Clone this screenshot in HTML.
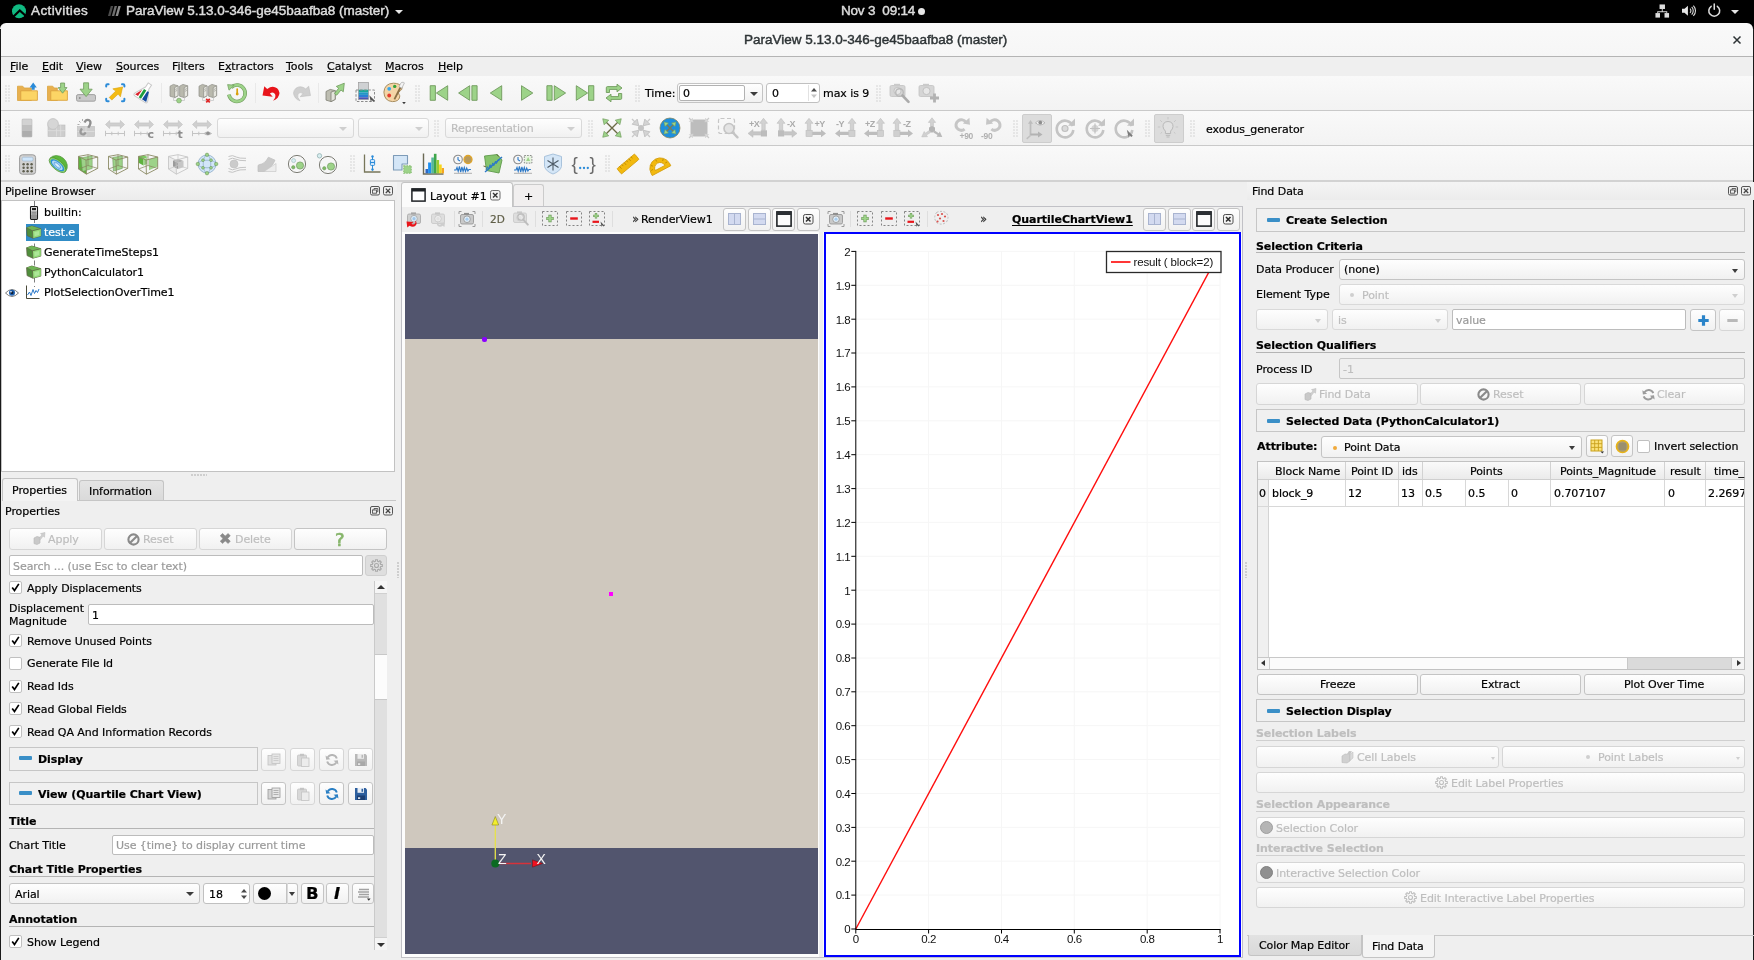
<!DOCTYPE html>
<html lang="en">
<head>
<meta charset="utf-8">
<title>ParaView 5.13.0-346-ge45baafba8 (master)</title>
<style>
*{box-sizing:border-box;margin:0;padding:0}
html,body{width:1754px;height:960px;overflow:hidden;background:#efefef}
body{position:relative;will-change:transform;font-family:"DejaVu Sans","Liberation Sans",sans-serif;font-size:11px;letter-spacing:-0.06px;color:#000;line-height:1;-webkit-text-stroke:0.2px}
.a{position:absolute}
.t{position:absolute;white-space:nowrap;line-height:14px;height:14px}
.b{font-weight:bold;letter-spacing:-.06px}
.dis{color:#bebebe}
/* gnome top bar */
#topbar{left:0;top:0;width:1754px;height:31px;background:#000;color:#dcdcdc;font-family:"Liberation Sans","DejaVu Sans",sans-serif;font-size:13.5px;font-weight:normal;letter-spacing:0;-webkit-text-stroke:0.45px #dcdcdc}
#topbar .t{line-height:16px;height:16px;top:3px}
/* window */
#titlebar{left:0;top:23px;width:1753px;height:34px;background:linear-gradient(#f9f9f9,#f6f6f6);border-bottom:1px solid #b4b4b4;border-top-left-radius:6px;border-top-right-radius:6px}
#menubar{left:0;top:57px;width:1754px;height:19px;background:#efefef}
.tbrow{left:0;width:1754px;height:35px;background:linear-gradient(#f9f9f9,#f3f3f3);border-bottom:1px solid #c9c9c9}
.u{text-decoration:underline;text-underline-offset:1px}
/* generic qt widgets */
.btn{position:absolute;border:1px solid #c4c4c4;border-radius:3px;background:linear-gradient(#fefefe,#f1f1f1);text-align:center;white-space:nowrap}
.btn.d{border-color:#d6d6d6;color:#bebebe}
.inp{position:absolute;border:1px solid #bcbcbc;border-radius:2px;background:#fff;white-space:nowrap}
.cmb{position:absolute;border:1px solid #c4c4c4;border-radius:3px;background:linear-gradient(#fefefe,#f1f1f1);white-space:nowrap}
.cmb.d{border-color:#d9d9d9;color:#bebebe}
.arr{position:absolute;width:0;height:0;border-left:4px solid transparent;border-right:4px solid transparent;border-top:4px solid #3c3c3c}
.arr.d{border-top-color:#cfcfcf}
.hdr{position:absolute;border:1px solid #c6c6c6;background:#f0f0f0;font-weight:bold;letter-spacing:-.06px}
.hdr .minus{position:absolute;left:9px;top:8px;width:13px;height:4px;background:#3a8fc7;border-radius:1px}
.hline{position:absolute;height:1px;background:#b4b4b4}
.cb{position:absolute;width:13px;height:13px;border:1px solid #c0c0c0;border-radius:2px;background:#fff}
.cb svg{position:absolute;left:0;top:0}
.handle{position:absolute;width:6px;height:17px;background-image:radial-gradient(circle at 1px 1px,#c3c3c3 0.5px,transparent 0.8px);background-size:3px 3px}
.sep{position:absolute;width:1px;height:20px;background:#e9e9e9;margin-top:1px}
svg{position:absolute;overflow:visible}
</style>
</head>
<body>
<!-- ======= GNOME TOP BAR ======= -->
<div id="topbar" class="a">
<svg style="left:11px;top:4px" width="16" height="15" viewBox="0 0 16 15"><circle cx="8" cy="7.300" r="7" fill="#10b981"/><path d="M.5 14.500L8.800 6.400L16 13" fill="none" stroke="#000" stroke-width="2.200"/></svg>
<span class="t" style="left:31px;letter-spacing:.4px">Activities</span>
<svg style="left:108px;top:6px" width="13" height="10" viewBox="0 0 13 10"><path d="M0 10L2.800 0h2.400L2.400 10z" fill="#4d4d4d"/><path d="M3.800 10L6.600 0H9L6.200 10z" fill="#6e6e6e"/><path d="M7.600 10L10.400 0h2.400L10 10z" fill="#8a8a8a"/></svg>
<span class="t" style="left:126px">ParaView 5.13.0-346-ge45baafba8 (master)</span>
<span class="arr" style="left:395px;top:10px;border-top-color:#e6e6e6"></span>
<span class="t" style="left:841px;letter-spacing:-.2px">Nov 3&nbsp; 09:14</span>
<span class="a" style="left:918px;top:8px;width:7px;height:7px;border-radius:50%;background:#e6e6e6"></span>
<!-- tray -->
<svg style="left:1655px;top:4px" width="14.500" height="14.500" viewBox="0 0 16 16" fill="#dcdcdc"><rect x="5" y="0.5" width="6" height="5"/><rect x="0.5" y="10" width="5" height="5"/><rect x="10.5" y="10" width="5" height="5"/><path d="M7.5 5h1v3h5v2h-1v-1h-9v1h-1v-2h5z"/></svg>
<svg style="left:1680.500px;top:4px" width="15.500" height="13.500" viewBox="0 0 18 16" fill="none" stroke="#dcdcdc"><path d="M1 5.5h3l4-3.5v12l-4-3.5h-3z" fill="#e6e6e6" stroke="none"/><path d="M10.5 5.5a3.5 3.5 0 0 1 0 5M12.5 3.5a6.5 6.5 0 0 1 0 9M14.5 1.8a9 9 0 0 1 0 12.4" stroke-width="1.3"/></svg>
<svg style="left:1706.500px;top:3px" width="14.500" height="14.500" viewBox="0 0 16 16" fill="none" stroke="#dcdcdc" stroke-width="1.700" stroke-linecap="round"><path d="M4.6 3.6a6 6 0 1 0 6.8 0M8 1v6"/></svg>
<span class="arr" style="left:1731px;top:10px;border-top-color:#e6e6e6"></span>
</div>

<!-- ======= TITLE BAR ======= -->
<div id="titlebar" class="a">
<span class="t" style="left:744px;top:9px;font-family:'Liberation Sans',sans-serif;font-weight:normal;font-size:13.5px;letter-spacing:0;line-height:16px;height:16px;color:#2e3436;-webkit-text-stroke:0.45px #2e3436">ParaView 5.13.0-346-ge45baafba8 (master)</span>
<svg style="left:1733px;top:13px" width="8" height="8" viewBox="0 0 8 8"><path d="M.5 .5l7 7M7.500 .5l-7 7" stroke="#2e3436" stroke-width="1.500"/></svg>
</div>

<!-- ======= MENU BAR ======= -->
<div id="menubar" class="a">
<span class="t" style="left:10px;top:3px"><span class="u">F</span>ile</span>
<span class="t" style="left:42px;top:3px"><span class="u">E</span>dit</span>
<span class="t" style="left:76px;top:3px"><span class="u">V</span>iew</span>
<span class="t" style="left:116px;top:3px"><span class="u">S</span>ources</span>
<span class="t" style="left:172px;top:3px">F<span class="u">i</span>lters</span>
<span class="t" style="left:218px;top:3px">E<span class="u">x</span>tractors</span>
<span class="t" style="left:286px;top:3px"><span class="u">T</span>ools</span>
<span class="t" style="left:327px;top:3px"><span class="u">C</span>atalyst</span>
<span class="t" style="left:385px;top:3px"><span class="u">M</span>acros</span>
<span class="t" style="left:438px;top:3px"><span class="u">H</span>elp</span>
</div>


<!-- ======= TOOLBARS ======= -->
<div class="a tbrow" style="top:76px"></div>
<div class="a tbrow" style="top:111px"></div>
<div class="a tbrow" style="top:146px;height:35px;border-bottom:none"></div>
<i class="handle" style="left:5px;top:85px"></i>
<svg style="left:15px;top:81px" width="24" height="24" viewBox="0 0 24 24"><path d="M2.5 19.5V5.2h5.2l1.6 1.8h7v12.5z" fill="#e8b04f" stroke="#dba43f" stroke-width=".8"/><path d="M5.8 19.3V9.8h16.6v9.5z" fill="#fcd565" stroke="#dba43f" stroke-width=".9"/><path d="M14.6 6.6L18.2 1.6L21.8 6.6h-2.1v2.2h-3v-2.2z" fill="#2b8bd8"/></svg>
<svg style="left:45px;top:81px" width="24" height="24" viewBox="0 0 24 24"><path d="M2.5 19.5V5.2h5.2l1.6 1.8h3v12.5z" fill="#e8b04f" stroke="#dba43f" stroke-width=".8"/><path d="M5.8 19.3V9.8h16.6v9.5z" fill="#fcd565" stroke="#dba43f" stroke-width=".9"/><path d="M15.6 2h4v4.6h2.4L17.6 12.2L13.2 6.6h2.4z" fill="#9dd389" stroke="#6f9a5c" stroke-width=".8"/></svg>
<svg style="left:74px;top:81px" width="24" height="24" viewBox="0 0 24 24"><rect x="2.5" y="13.6" width="19" height="6.6" rx="1.6" fill="#c9c9c9" stroke="#9b9b9b" stroke-width=".9"/><circle cx="5.8" cy="17" r=".9" fill="#8a8a8a"/><path d="M9.6 1.8h5v6.4h3.6L12.1 15.6L6 8.2h3.6z" fill="#9dd389" stroke="#6f9a5c" stroke-width=".8"/></svg>
<svg style="left:103px;top:81px" width="24" height="24" viewBox="0 0 24 24"><path d="M5.200 17.200l7.600-7.400l-3.400-2.600l11.400-2.200l-2.600 11.400l-2.600-3.200l-7.400 7z" fill="#f4bb12" stroke="#d9a20c" stroke-width=".7" stroke-linejoin="round" transform="translate(12.500 12) scale(.86) translate(-12.500 -12)"/><g fill="none" stroke="#2b8bd8" stroke-width="2" stroke-linecap="round"><path d="M3.200 5.600V4.400Q3.200 3.200 4.400 3.200H5.600"/><path d="M19 3.200h1.200Q21.400 3.200 21.400 4.400v1.200"/><path d="M3.200 17.800v1.200Q3.200 20.200 4.400 20.200h1.200"/><path d="M21.400 17.800v1.200Q21.400 20.200 20.200 20.200h-1.200"/></g></svg>
<svg style="left:132px;top:81px" width="24" height="24" viewBox="0 0 24 24"><g transform="rotate(33 12 12)"><path d="M10 1.200h4v5l5.600 10.600q1 2.600-1.800 2.600H6.200q-2.800 0-1.800-2.600L10 6.200z" fill="#fff" stroke="#c9c9c9" stroke-width="1"/><path d="M8.600 10.200l-3.400 7.600h3.400z" fill="#d9202a"/><path d="M9.800 8.600v9.800h2.800V8.600z" fill="#1e9e3e"/><path d="M13.800 8.600h1.800l3.200 9.800h-5z" fill="#134a9c"/></g></svg>
<i class="sep" style="left:161px;top:82px"></i>
<svg style="left:167px;top:81px" width="24" height="24" viewBox="0 0 24 24"><g stroke="#8e8e86" stroke-width=".7" stroke-linejoin="round"><path d="M3 5.200l3.400-1.800l4.600 1.400v10l-3.400 1.800L3 15.200z" fill="#b9b9ad"/><path d="M7.600 6.600L11 4.800v10l-3.400 1.800z" fill="#e6e6df"/><path d="M12.600 5.200l3.400-1.800l4.600 1.400v10l-3.400 1.800l-4.600-1.400z" fill="#b9b9ad"/><path d="M17.200 6.600l3.400-1.800v10l-3.400 1.800z" fill="#e6e6df"/></g><path d="M8.400 8.500l1.800-.9M8.400 10.300l1.800-.9M18 8.500l1.800-.9M18 10.300l1.800-.9" stroke="#9a9a92" stroke-width=".7"/><path d="M6.500 16.500v3h11v-3" fill="none" stroke="#cdcdcd" stroke-width=".9"/><circle cx="12" cy="19.600" r="2.400" fill="#9dd389" stroke="#6f9a5c" stroke-width=".6"/></svg>
<svg style="left:196px;top:81px" width="24" height="24" viewBox="0 0 24 24"><g stroke="#8e8e86" stroke-width=".7" stroke-linejoin="round"><path d="M3 5.200l3.400-1.800l4.600 1.400v10l-3.400 1.800L3 15.200z" fill="#b9b9ad"/><path d="M7.600 6.600L11 4.800v10l-3.400 1.800z" fill="#e6e6df"/><path d="M12.600 5.200l3.400-1.800l4.600 1.400v10l-3.400 1.800l-4.600-1.400z" fill="#b9b9ad"/><path d="M17.200 6.600l3.400-1.800v10l-3.400 1.800z" fill="#e6e6df"/></g><path d="M8.400 8.500l1.800-.9M8.400 10.300l1.800-.9M18 8.500l1.800-.9M18 10.300l1.800-.9" stroke="#9a9a92" stroke-width=".7"/><path d="M6.500 16.500v3h11v-3" fill="none" stroke="#cdcdcd" stroke-width=".9"/><path d="M10.200 17.800l3.600 3.600M13.800 17.800l-3.600 3.600" stroke="#e02828" stroke-width="1.700"/></svg>
<svg style="left:225px;top:81px" width="24" height="24" viewBox="0 0 24 24"><path d="M6.200 6.400A8.200 8.200 0 1 1 3.900 13.600" fill="none" stroke="#6f9a5c" stroke-width="3.600"/><path d="M6.200 6.400A8.200 8.200 0 1 1 3.900 13.600" fill="none" stroke="#9dd389" stroke-width="2.400"/><path d="M2.600 3.600l6.600 .6l-5.200 5z" fill="#9dd389" stroke="#6f9a5c" stroke-width=".7"/><path d="M12.200 8v4" stroke="#d9a10f" stroke-width="1.700" stroke-linecap="round"/><circle cx="12.200" cy="13" r="1.400" fill="#d9a10f"/></svg>
<i class="sep" style="left:255px;top:82px"></i>
<svg style="left:260px;top:81px" width="24" height="24" viewBox="0 0 24 24"><path d="M2.500 14.500l1.800-9.300l2.900 2.700q5.400-4 9.900-.6q4.300 4 .6 9.400q-1.700 2.200-4.700 3.100q3.300-3.500 2.100-6.500q-1.700-3.100-5.200-.9l2.800 3.300z" fill="#e8151b"/></svg>
<svg style="left:289px;top:81px" width="24" height="24" viewBox="0 0 24 24"><path d="M21.500 14.500l-1.800-9.300l-2.900 2.700q-5.400-4-9.900-.6q-4.300 4-.6 9.400q1.700 2.200 4.700 3.100q-3.300-3.500-2.100-6.500q1.700-3.100 5.200-.9l-2.800 3.300z" fill="#cfcfcf" stroke="#bdbdbd" stroke-width=".6"/></svg>
<i class="sep" style="left:318px;top:82px"></i>
<svg style="left:323px;top:81px" width="24" height="24" viewBox="0 0 24 24"><path d="M3 10.500l4.200-2.100l5 1.200v8.800l-4.200 2.200l-5-1.500z" fill="#bdbdb1" stroke="#7f7f73" stroke-width=".8"/><path d="M8 11.200l4.200-1.600v8.800l-4.200 2.200z" fill="#e4e4dc" stroke="#7f7f73" stroke-width=".8"/><path d="M11.500 12.500l4.200-5.300l-2.400-1.800l8-3.200l-1 8.600l-2.300-1.800l-4.300 5.200z" fill="#9dd389" stroke="#6f9a5c" stroke-width=".8"/></svg>
<svg style="left:353px;top:81px" width="24" height="24" viewBox="0 0 24 24"><rect x="5.500" y="1.500" width="10" height="7.200" fill="#cfd1d3"/><rect x="5.500" y="8.700" width="10" height="2.600" fill="#18a99a"/><rect x="5.500" y="11.300" width="10" height="2.600" fill="#2397c4"/><rect x="5.500" y="13.900" width="10" height="2.400" fill="#2a7fd6"/><rect x="5.500" y="16.300" width="10" height="2.200" fill="#4c53b4"/><rect x="5.500" y="1.500" width="10" height="17" fill="none" stroke="#9a9a9a" stroke-width=".7"/><rect x="3" y="9" width="18.500" height="11.500" fill="none" stroke="#8c8c8c" stroke-width="1" stroke-dasharray="2.500 1.600"/><path d="M16.300 14.200l5.300 5.400l-1.300 1.200l-1.600-1.700l-.8 2.200z" fill="#555"/></svg>
<svg style="left:382px;top:81px" width="24" height="24" viewBox="0 0 24 24"><path d="M11.500 2.200q6.500 0 8.400 4.300q.6 2-1.500 3.200q-2.600 1.200-1.700 3.300q1.400 1.300 1 3q-.9 4.600-7.300 4.600q-8.200-.6-8.500-9.500q.6-8.600 9.600-8.900z" fill="#f4d5a6" stroke="#a88d5e" stroke-width="1"/><circle cx="7.200" cy="7.800" r="1.900" fill="#35a7f0"/><circle cx="12.700" cy="5.400" r="1.700" fill="#35a33a"/><circle cx="7.200" cy="14.500" r="1.900" fill="#e53b2d"/><path d="M19.300 2.600l1.700 .9l-7.800 15.300l-1.600-.8z" fill="#8a7146"/><path d="M18.700 2.300q1-1.600 2.800-.9l.9 .5l-2.500 5.300l-2.900-1.500z" fill="#f3f3f3" stroke="#9a9a9a" stroke-width=".6"/><path d="M20.200 21l3.600 0l-1.800 2.200z" fill="#3a3a3a"/></svg>
<i class="handle" style="left:415px;top:85px"></i>
<svg style="left:426px;top:81px" width="24" height="24" viewBox="0 0 24 24"><path d="M4.200 4.700h5.200v14.600H4.200z" fill="#9dd389" stroke="#6f9a5c" stroke-width=".9" stroke-linejoin="round"/><path d="M21.700 4.700v14.600L10.400 12z" fill="#9dd389" stroke="#6f9a5c" stroke-width=".9" stroke-linejoin="round"/></svg>
<svg style="left:456px;top:81px" width="24" height="24" viewBox="0 0 24 24"><path d="M13.700 4.700v14.600L2.600 12z" fill="#9dd389" stroke="#6f9a5c" stroke-width=".9" stroke-linejoin="round"/><path d="M15.900 4.700h5.200v14.600h-5.200z" fill="#9dd389" stroke="#6f9a5c" stroke-width=".9" stroke-linejoin="round"/></svg>
<svg style="left:484px;top:81px" width="24" height="24" viewBox="0 0 24 24"><path d="M17.700 4.700v14.600L6.300 12z" fill="#9dd389" stroke="#6f9a5c" stroke-width=".9" stroke-linejoin="round"/></svg>
<svg style="left:515px;top:81px" width="24" height="24" viewBox="0 0 24 24"><path d="M6.500 4.700v14.600L17.800 12z" fill="#9dd389" stroke="#6f9a5c" stroke-width=".9" stroke-linejoin="round"/></svg>
<svg style="left:544px;top:81px" width="24" height="24" viewBox="0 0 24 24"><path d="M2.900 4.700h5.200v14.600H2.900z" fill="#9dd389" stroke="#6f9a5c" stroke-width=".9" stroke-linejoin="round"/><path d="M10.300 4.700v14.600L21.600 12z" fill="#9dd389" stroke="#6f9a5c" stroke-width=".9" stroke-linejoin="round"/></svg>
<svg style="left:574px;top:81px" width="24" height="24" viewBox="0 0 24 24"><path d="M2.300 4.700v14.600L13.600 12z" fill="#9dd389" stroke="#6f9a5c" stroke-width=".9" stroke-linejoin="round"/><path d="M14.600 4.700h5.200v14.600h-5.200z" fill="#9dd389" stroke="#6f9a5c" stroke-width=".9" stroke-linejoin="round"/></svg>
<svg style="left:602px;top:81px" width="24" height="24" viewBox="0 0 24 24"><g fill="#9dd389" stroke="#6f9a5c" stroke-width=".9" stroke-linejoin="round"><path d="M4.300 11.500V6.800q0-1.200 1.200-1.200h9.500V3.200l5 3.800l-5 3.800V8.400H7.500v3.100z"/><path d="M19.700 12.500v4.700q0 1.200-1.200 1.200H9v2.400l-5-3.800l5-3.800v2.400h7.500v-3.100z"/></g></svg>
<i class="handle" style="left:635px;top:85px"></i>
<span class="t" style="left:645px;top:87px">Time:</span>
<div class="cmb" style="left:677px;top:83px;width:86px;height:20px"><div class="inp" style="left:1px;top:1px;width:66px;height:16px;border-color:#b2b2b2"><span class="t" style="left:3px;top:1px">0</span></div><i class="arr" style="left:72px;top:8px"></i></div>
<div class="inp" style="left:766px;top:83px;width:54px;height:20px;border-color:#c0c0c0;border-radius:3px"><span class="t" style="left:5px;top:3px">0</span><i class="a" style="left:41px;top:1px;width:1px;height:16px;background:#e2e2e2"></i><svg style="left:43px;top:3px" width="8" height="12" viewBox="0 0 8 12"><path d="M1 4.500L4 1l3 3.500z" fill="#4a4a4a"/><path d="M1 7.500L4 11l3-3.500z" fill="#c4c4c4"/></svg></div>
<span class="t" style="left:823px;top:87px">max is 9</span>
<i class="handle" style="left:876px;top:85px"></i>
<svg style="left:888px;top:81px" width="24" height="24" viewBox="0 0 24 24"><g opacity=".9"><rect x="2" y="4.500" width="15" height="11" rx="1.500" fill="#d2d2d2" stroke="#bdbdbd" stroke-width=".8"/><rect x="6" y="2.800" width="6" height="2.500" fill="#c6c6c6"/><circle cx="9.500" cy="10" r="3.600" fill="#e6e6e6" stroke="#bdbdbd" stroke-width="1"/></g><circle cx="11.500" cy="11.500" r="3.800" fill="none" stroke="#b9b9b9" stroke-width="1.400"/><path d="M14.500 14.500l6 6.300" stroke="#ababab" stroke-width="2.600" stroke-linecap="round"/></svg>
<svg style="left:917px;top:81px" width="24" height="24" viewBox="0 0 24 24"><g opacity=".9"><rect x="2" y="4.500" width="15" height="11" rx="1.500" fill="#d2d2d2" stroke="#bdbdbd" stroke-width=".8"/><rect x="6" y="2.800" width="6" height="2.500" fill="#c6c6c6"/><circle cx="9.500" cy="10" r="3.600" fill="#e6e6e6" stroke="#bdbdbd" stroke-width="1"/></g><path d="M17.500 12.500v9M13 17h9" stroke="#b2b2b2" stroke-width="2.800"/></svg>
<i class="handle" style="left:5px;top:120px"></i>
<svg style="left:15px;top:116px" width="24" height="24" viewBox="0 0 24 24"><rect x="7" y="3" width="10" height="6" fill="#d2d2d2"/><rect x="7" y="9" width="10" height="6" fill="#bfbfbf"/><rect x="7" y="15" width="10" height="6" fill="#adadad"/><rect x="7" y="3" width="10" height="18" rx="1" fill="none" stroke="#bcbcbc" stroke-width=".6"/></svg>
<svg style="left:44px;top:116px" width="24" height="24" viewBox="0 0 24 24"><rect x="4" y="9" width="17" height="11.500" fill="#cdcdcd" stroke="#bdbdbd" stroke-width=".6"/><path d="M12.500 9v11.500M4 14.700h17M16.700 9v11.500" stroke="#dedede" stroke-width=".8"/><circle cx="9" cy="8" r="5.400" fill="#d6d6d6" stroke="#c2c2c2" stroke-width=".8"/></svg>
<svg style="left:73px;top:116px" width="24" height="24" viewBox="0 0 24 24"><rect x="4.500" y="10.500" width="17" height="10" fill="#cdcdcd" stroke="#bdbdbd" stroke-width=".6"/><path d="M13 10.500v10M4.500 15.500h17" stroke="#e0e0e0" stroke-width=".8"/><path d="M11.500 6.500q1.500-3.500 4.300-2.400q2.800 1.600 1 5l-1.500 2.600" fill="none" stroke="#8f8f8f" stroke-width="2.300"/><path d="M9 12.500q-2.700 3.400-.6 5.400q2.500 1.600 4.400-1.500" fill="none" stroke="#9a9a9a" stroke-width="2.300"/><path d="M6 5l1.500 1.500M9.500 3v2M4.500 8.500h2" stroke="#a5a5a5" stroke-width=".9"/></svg>
<svg style="left:103px;top:116px" width="24" height="24" viewBox="0 0 24 24"><path d="M2.500 8.500l4.200-4v2.400h10.600V4.500l4.200 4l-4.200 4v-2.400H6.700v2.400z" fill="#cfcfcf" stroke="#bfbfbf" stroke-width=".6"/><path d="M2.500 17.500h19M2.500 14.800v5.400M21.500 14.800v5.400M8.800 15.700v3.600M15.200 15.700v3.600" stroke="#c4c4c4" stroke-width="1"/></svg>
<svg style="left:132px;top:116px" width="24" height="24" viewBox="0 0 24 24"><path d="M2.500 8.500l4.200-4v2.400h10.600V4.500l4.200 4l-4.200 4v-2.400H6.700v2.400z" fill="#cfcfcf" stroke="#bfbfbf" stroke-width=".6"/><path d="M2.500 17.500h19M2.500 14.800v5.400M8.800 15.700v3.600M15.200 15.700v3.600" stroke="#c4c4c4" stroke-width="1"/><text x="15.500" y="21.500" font-family="DejaVu Sans" font-weight="bold" font-size="11" fill="#8f8f8f">c</text></svg>
<svg style="left:161px;top:116px" width="24" height="24" viewBox="0 0 24 24"><path d="M2.500 8.500l4.200-4v2.400h10.600V4.500l4.200 4l-4.200 4v-2.400H6.700v2.400z" fill="#cfcfcf" stroke="#bfbfbf" stroke-width=".6"/><path d="M2.500 17.500h19M2.500 14.800v5.400M8.800 15.700v3.600M15.200 15.700v3.600" stroke="#c4c4c4" stroke-width="1"/><text x="16.500" y="21.500" font-family="DejaVu Sans" font-weight="bold" font-size="11" fill="#8f8f8f">t</text></svg>
<svg style="left:190px;top:116px" width="24" height="24" viewBox="0 0 24 24"><path d="M2.500 8.500l4.200-4v2.400h10.600V4.500l4.200 4l-4.200 4v-2.400H6.700v2.400z" fill="#cfcfcf" stroke="#bfbfbf" stroke-width=".6"/><path d="M2.500 17.500h19M2.500 14.800v5.400M8.800 15.700v3.600" stroke="#c4c4c4" stroke-width="1"/><path d="M13.500 17.500q4-4.200 8.500 0q-4.500 4.200-8.500 0z" fill="#bdbdbd"/><circle cx="18" cy="17.300" r="1.700" fill="#8f8f8f"/></svg>
<div class="cmb d" style="left:217px;top:118px;width:137px;height:20px"><i class="arr d" style="left:121px;top:8px"></i></div>
<div class="cmb d" style="left:358px;top:118px;width:71px;height:20px"><i class="arr d" style="left:56px;top:8px"></i></div>
<i class="handle" style="left:434px;top:120px"></i>
<div class="cmb d" style="left:445px;top:118px;width:137px;height:20px"><span class="t" style="left:5px;top:3px">Representation</span><i class="arr d" style="left:121px;top:8px"></i></div>
<i class="handle" style="left:588px;top:120px"></i>
<svg style="left:600px;top:116px" width="24" height="24" viewBox="0 0 24 24"><path d="M5 5l14 14M19 5L5 19" stroke="#6b6a45" stroke-width="1.400"/><path d="M0 -3.200L3.600 2.600H-3.600z" transform="translate(4.8 4.8) rotate(-45) scale(0.9)" fill="#9dd389" stroke="#6f9a5c" stroke-width=".7" stroke-linejoin="round"/><path d="M0 -3.200L3.600 2.600H-3.600z" transform="translate(19.2 4.8) rotate(45) scale(0.9)" fill="#9dd389" stroke="#6f9a5c" stroke-width=".7" stroke-linejoin="round"/><path d="M0 -3.200L3.600 2.600H-3.600z" transform="translate(4.8 19.2) rotate(-135) scale(0.9)" fill="#9dd389" stroke="#6f9a5c" stroke-width=".7" stroke-linejoin="round"/><path d="M0 -3.200L3.600 2.600H-3.600z" transform="translate(19.2 19.2) rotate(135) scale(0.9)" fill="#9dd389" stroke="#6f9a5c" stroke-width=".7" stroke-linejoin="round"/></svg>
<svg style="left:629px;top:116px" width="24" height="24" viewBox="0 0 24 24"><circle cx="12" cy="12" r="3" fill="#c4c4c4"/><path d="M0 -3.200L3.600 2.600H-3.600z" transform="translate(7.5 7.5) rotate(135) scale(1)" fill="#d4d4d4" stroke="#b9b9b9" stroke-width=".7" stroke-linejoin="round"/><path d="M0 -3.200L3.600 2.600H-3.600z" transform="translate(16.5 7.5) rotate(-135) scale(1)" fill="#d4d4d4" stroke="#b9b9b9" stroke-width=".7" stroke-linejoin="round"/><path d="M0 -3.200L3.600 2.600H-3.600z" transform="translate(7.5 16.5) rotate(45) scale(1)" fill="#d4d4d4" stroke="#b9b9b9" stroke-width=".7" stroke-linejoin="round"/><path d="M0 -3.200L3.600 2.600H-3.600z" transform="translate(16.5 16.5) rotate(-45) scale(1)" fill="#d4d4d4" stroke="#b9b9b9" stroke-width=".7" stroke-linejoin="round"/><path d="M3 3l3 3M21 3l-3 3M3 21l3-3M21 21l-3-3" stroke="#c9c9c9" stroke-width="1.300"/></svg>
<svg style="left:658px;top:116px" width="24" height="24" viewBox="0 0 24 24"><circle cx="12" cy="12" r="10" fill="#1e8fdd" stroke="#7d7c52" stroke-width=".7"/><path d="M7.500 7.500l9 9M16.500 7.500l-9 9" stroke="#7d7c52" stroke-width="1.300"/><path d="M0 -3.200L3.600 2.600H-3.600z" transform="translate(7.5 7.5) rotate(-45) scale(0.7)" fill="#9dd389" stroke="#6f9a5c" stroke-width=".7" stroke-linejoin="round"/><path d="M0 -3.200L3.600 2.600H-3.600z" transform="translate(16.5 7.5) rotate(45) scale(0.7)" fill="#9dd389" stroke="#6f9a5c" stroke-width=".7" stroke-linejoin="round"/><path d="M0 -3.200L3.600 2.600H-3.600z" transform="translate(7.5 16.5) rotate(-135) scale(0.7)" fill="#9dd389" stroke="#6f9a5c" stroke-width=".7" stroke-linejoin="round"/><path d="M0 -3.200L3.600 2.600H-3.600z" transform="translate(16.5 16.5) rotate(135) scale(0.7)" fill="#9dd389" stroke="#6f9a5c" stroke-width=".7" stroke-linejoin="round"/></svg>
<svg style="left:687px;top:116px" width="24" height="24" viewBox="0 0 24 24"><rect x="3.500" y="3.500" width="17" height="17" rx="4" fill="#bdbdbd"/><path d="M0 -3.200L3.600 2.600H-3.600z" transform="translate(5 5) rotate(135) scale(0.6)" fill="#d8d8d8" stroke="#c4c4c4" stroke-width=".7" stroke-linejoin="round"/><path d="M0 -3.200L3.600 2.600H-3.600z" transform="translate(19 5) rotate(-135) scale(0.6)" fill="#d8d8d8" stroke="#c4c4c4" stroke-width=".7" stroke-linejoin="round"/><path d="M0 -3.200L3.600 2.600H-3.600z" transform="translate(5 19) rotate(45) scale(0.6)" fill="#d8d8d8" stroke="#c4c4c4" stroke-width=".7" stroke-linejoin="round"/><path d="M0 -3.200L3.600 2.600H-3.600z" transform="translate(19 19) rotate(-45) scale(0.6)" fill="#d8d8d8" stroke="#c4c4c4" stroke-width=".7" stroke-linejoin="round"/><path d="M2 2l2 2M22 2l-2 2M2 22l2-2M22 22l-2-2" stroke="#c9c9c9" stroke-width="1.200"/></svg>
<svg style="left:716px;top:116px" width="24" height="24" viewBox="0 0 24 24"><rect x="2.500" y="2.500" width="16" height="15" rx="2" fill="none" stroke="#c6c6c6" stroke-width="1.200" stroke-dasharray="4 2.500"/><circle cx="13" cy="12.500" r="5" fill="#e4e4e4" stroke="#c4c4c4" stroke-width="1.600"/><path d="M16.800 16.500l4.700 4.800" stroke="#c4c4c4" stroke-width="2.400" stroke-linecap="round"/></svg>
<svg style="left:746px;top:116px" width="24" height="24" viewBox="0 0 24 24"><text x="3" y="11" font-family="Liberation Sans" font-weight="bold" font-size="9" fill="#ababab" letter-spacing="-.4">+X</text><path d="M17.5 2.300l4 5h-2.300v7h-3.400v-7h-2.300z" fill="#d2d2d2" stroke="#bdbdbd" stroke-width=".6"/><rect x="14.800" y="14.300" width="6.200" height="6.200" fill="#bdbdbd"/><path d="M14.800 15.700H7v-2.200l-5 3.900l5 3.900v-2.200h7.800z" fill="#c6c6c6" stroke="#bababa" stroke-width=".5"/></svg>
<svg style="left:775px;top:116px" width="24" height="24" viewBox="0 0 24 24"><text x="12" y="11" font-family="Liberation Sans" font-weight="bold" font-size="9" fill="#ababab" letter-spacing="-.4">-X</text><path d="M6 2.300l4 5h-2.300v7h-3.400v-7h-2.300z" fill="#d2d2d2" stroke="#bdbdbd" stroke-width=".6"/><rect x="3" y="14.300" width="6.200" height="6.200" fill="#bdbdbd"/><path d="M9.200 15.700H17v-2.200l5 3.900l-5 3.900v-2.200H9.200z" fill="#c6c6c6" stroke="#bababa" stroke-width=".5"/></svg>
<svg style="left:804px;top:116px" width="24" height="24" viewBox="0 0 24 24"><text x="10.5" y="11" font-family="Liberation Sans" font-weight="bold" font-size="9" fill="#ababab" letter-spacing="-.4">+Y</text><path d="M5 2.300l4 5h-2.300v7h-3.400v-7h-2.300z" fill="#d2d2d2" stroke="#bdbdbd" stroke-width=".6"/><rect x="2" y="14.300" width="6.200" height="6.200" fill="#d0d0d0" stroke="#bdbdbd" stroke-width=".6"/><path d="M8.200 15.700H17v-2.200l5 3.900l-5 3.900v-2.200H8.200z" fill="#bdbdbd"/></svg>
<svg style="left:833px;top:116px" width="24" height="24" viewBox="0 0 24 24"><text x="3" y="11" font-family="Liberation Sans" font-weight="bold" font-size="9" fill="#ababab" letter-spacing="-.4">-Y</text><path d="M19 2.300l4 5h-2.300v7h-3.400v-7h-2.300z" fill="#d2d2d2" stroke="#bdbdbd" stroke-width=".6"/><rect x="15.800" y="14.300" width="6.200" height="6.200" fill="#d0d0d0" stroke="#bdbdbd" stroke-width=".6"/><path d="M15.800 15.700H7v-2.200l-5 3.900l5 3.900v-2.200h8.800z" fill="#bdbdbd"/></svg>
<svg style="left:862px;top:116px" width="24" height="24" viewBox="0 0 24 24"><text x="3" y="11" font-family="Liberation Sans" font-weight="bold" font-size="9" fill="#ababab" letter-spacing="-.4">+Z</text><path d="M18.5 2.300l4 5h-2.300v7h-3.400v-7h-2.300z" fill="#d2d2d2" stroke="#bdbdbd" stroke-width=".6"/><rect x="15.300" y="14.300" width="6.200" height="6.200" fill="#d0d0d0" stroke="#bdbdbd" stroke-width=".6"/><path d="M15.300 15.700H7v-2.200l-5 3.900l5 3.900v-2.200h8.300z" fill="#bdbdbd"/></svg>
<svg style="left:891px;top:116px" width="24" height="24" viewBox="0 0 24 24"><text x="12" y="11" font-family="Liberation Sans" font-weight="bold" font-size="9" fill="#ababab" letter-spacing="-.4">-Z</text><path d="M6 2.300l4 5h-2.300v7h-3.400v-7h-2.300z" fill="#d2d2d2" stroke="#bdbdbd" stroke-width=".6"/><rect x="2.800" y="14.300" width="6.200" height="6.200" fill="#d0d0d0" stroke="#bdbdbd" stroke-width=".6"/><path d="M9 15.700H17v-2.200l5 3.900l-5 3.900v-2.200H9z" fill="#bdbdbd"/></svg>
<svg style="left:920px;top:116px" width="24" height="24" viewBox="0 0 24 24"><path d="M12 1.800l3.600 4.600h-2.200v5h-2.800v-5H8.400z" fill="#d2d2d2" stroke="#bdbdbd" stroke-width=".6"/><path d="M12 10l3 1.600v3.400l-3 1.800l-3-1.800v-3.400z" fill="#b5b5b5"/><path d="M9.400 14.500l-4.200 2.700l-1-1.700l-2.500 5.400l5.800-.2l-1.100-1.700l4.300-2.600z" fill="#d0d0d0" stroke="#bdbdbd" stroke-width=".5"/><path d="M14.600 14.500l4.200 2.700l1-1.700l2.500 5.400l-5.800-.2l1.100-1.700l-4.300-2.600z" fill="#b9b9b9"/></svg>
<svg style="left:950px;top:116px" width="24" height="24" viewBox="0 0 24 24"><path d="M14.600 13.200A5.300 5.300 0 1 1 15.800 6.300" fill="none" stroke="#c6c6c6" stroke-width="3"/><path d="M12.800 7.500l7.200 1.300l-.6-7z" fill="#c6c6c6"/><text x="9.500" y="23" font-family="Liberation Sans" font-weight="bold" font-size="8.500" fill="#b0b0b0" letter-spacing="-.3">+90</text></svg>
<svg style="left:979px;top:116px" width="24" height="24" viewBox="0 0 24 24"><path d="M12.400 13.200A5.300 5.300 0 1 0 11.200 6.300" fill="none" stroke="#c6c6c6" stroke-width="3"/><path d="M14.200 7.500l-7.200 1.300l.6-7z" fill="#c6c6c6"/><text x="2" y="23" font-family="Liberation Sans" font-weight="bold" font-size="8.500" fill="#b0b0b0" letter-spacing="-.3">-90</text></svg>
<i class="handle" style="left:1013px;top:120px"></i>
<div class="a" style="left:1022px;top:114px;width:30px;height:29px;background:#dcdcdc;border:1px solid #cdcdcd;border-radius:2px"></div>
<svg style="left:1024px;top:116px" width="24" height="24" viewBox="0 0 24 24"><path d="M6.500 19.500V7" stroke="#bdbdbd" stroke-width="1.800"/><path d="M6.500 4l2.600 3.800H3.900z" fill="#bdbdbd"/><path d="M6.500 17.500h7.500v-2l4.500 3l-4.500 3v-2H6.500z" fill="#b2b2b2"/><path d="M6.500 19.500l-3.800 3.300" stroke="#c0c0c0" stroke-width="1.600"/><path d="M11.500 6.800q4.500-4.500 9.500 0q-5 4.500-9.500 0z" fill="#f4f4f4" stroke="#a9a9a9" stroke-width=".8"/><circle cx="16.300" cy="6.600" r="1.900" fill="#8d8d8d"/></svg>
<svg style="left:1053px;top:116px" width="24" height="24" viewBox="0 0 24 24"><path d="M19.800 10A8.300 8.300 0 1 0 20.300 14" fill="none" stroke="#c4c4c4" stroke-width="2.600"/><path d="M15 9.800h7V2.500z" fill="#c4c4c4"/><circle cx="12" cy="12.500" r="3" fill="#dadada" stroke="#c0c0c0" stroke-width="1.200"/></svg>
<svg style="left:1083px;top:116px" width="24" height="24" viewBox="0 0 24 24"><path d="M19.800 10A8.300 8.300 0 1 0 20.300 14" fill="none" stroke="#c4c4c4" stroke-width="2.600"/><path d="M15 9.800h7V2.500z" fill="#c4c4c4"/><circle cx="12" cy="12.500" r="3.600" fill="#d4d4d4"/><path d="M12 7.500v10M7 12.500h10" stroke="#c0c0c0" stroke-width="1.200"/></svg>
<svg style="left:1112px;top:116px" width="24" height="24" viewBox="0 0 24 24"><path d="M19.800 10A8.300 8.300 0 1 0 20.300 14" fill="none" stroke="#c4c4c4" stroke-width="2.600"/><path d="M15 9.800h7V2.500z" fill="#c4c4c4"/><path d="M14.800 13.800l6 6l-1.500 1.300l-1.700-1.900l-.9 2.500z" fill="#7c7c7c"/></svg>
<i class="handle" style="left:1145px;top:120px"></i>
<div class="a" style="left:1154px;top:114px;width:30px;height:29px;background:#dcdcdc;border:1px solid #cdcdcd;border-radius:2px"></div>
<svg style="left:1156px;top:116px" width="24" height="24" viewBox="0 0 24 24"><path d="M12 5.500q5 .2 5 5q-.2 2.600-2.400 4.600v2.400h-5.200v-2.400Q7.200 13.100 7 10.500q0-4.800 5-5z" fill="#e2e2e2" stroke="#b9b9b9" stroke-width="1"/><path d="M9.800 19.300h4.400M10.500 21h3" stroke="#b9b9b9" stroke-width="1"/><path d="M12 1v2.400M4.200 4.200l1.800 1.800M19.800 4.200l-1.800 1.800M1.800 11h2.500M19.700 11h2.500M4.600 17.500l1.500-1.300M19.400 17.500l-1.500-1.300" stroke="#c6c6c6" stroke-width="1"/></svg>
<i class="handle" style="left:1190px;top:120px"></i>
<span class="t" style="left:1206px;top:123px">exodus_generator</span>
<i class="handle" style="left:5px;top:155px"></i>
<svg style="left:15px;top:151.5px" width="24" height="24" viewBox="0 0 24 24"><rect x="4.600" y="2.800" width="16" height="19.400" rx="2.800" fill="#d2d2d2" stroke="#9a9a9a" stroke-width="1"/><rect x="7.200" y="5.200" width="10.800" height="3.800" rx="1.400" fill="#cfe6fb" stroke="#9bb5cf" stroke-width=".6"/><g fill="#5e5e4e"><circle cx="8.600" cy="12.200" r="1.200"/><circle cx="12.600" cy="12.200" r="1.200"/><circle cx="16.600" cy="12.200" r="1.200"/><circle cx="8.600" cy="15.700" r="1.200"/><circle cx="12.600" cy="15.700" r="1.200"/><circle cx="16.600" cy="15.700" r="1.200"/><circle cx="8.600" cy="19.200" r="1.200"/><circle cx="12.600" cy="19.200" r="1.200"/><circle cx="16.600" cy="19.200" r="1.200"/></g></svg>
<svg style="left:45px;top:151.5px" width="24" height="24" viewBox="0 0 24 24"><g transform="translate(.8 .8) rotate(40 12 12)"><path d="M1.800 12a10.200 8.600 0 0 1 20.400 0z" fill="#5cb83c" stroke="#4b8f33" stroke-width=".6"/><ellipse cx="12" cy="12.400" rx="10.200" ry="4.700" fill="#8fd46f" stroke="#4b8f33" stroke-width=".7"/><ellipse cx="12" cy="12.600" rx="8.400" ry="3.700" fill="#2a8fd8"/><ellipse cx="12" cy="12.700" rx="6.600" ry="2.800" fill="#b5daf6"/><ellipse cx="12" cy="12.700" rx="4.200" ry="1.700" fill="none" stroke="#4d9bdc" stroke-width=".7"/><ellipse cx="12" cy="12.700" rx="2" ry=".7" fill="#e4f1fc"/></g></svg>
<svg style="left:75px;top:151.5px" width="24" height="24" viewBox="0 0 24 24"><path d="M3.500 4.400l7.500 3.700l.4 14.100l-7.900-5.200z" fill="#5fb23f"/><path d="M6 5.800l11.200-2v12.700L7.500 19.500z" fill="#9dd389" stroke="#6f9a5c" stroke-width=".5"/><g fill="none" stroke="#85845d" stroke-width=".85" stroke-linejoin="round"><path d="M3.500 4.400l7.500 3.700l.4 14.100l-7.900-5.200z"/><path d="M11 8.100l11.700-3.100v11.400l-11.300 5.800"/><path d="M3.500 4.400L13 2.700l9.700 2.300"/><path d="M13 2.700v10.800M3.500 17l9.500-3.500l9.700 2.900" stroke-width=".7"/></g></svg>
<svg style="left:105px;top:151.5px" width="24" height="24" viewBox="0 0 24 24"><path d="M7.700 5.400l9.600-1.400v12.400l-8.900 2.700z" fill="#9dd389" stroke="#6f9a5c" stroke-width=".6"/><g fill="none" stroke="#85845d" stroke-width=".85" stroke-linejoin="round"><path d="M3.500 4.400l7.500 3.700l.4 14.100l-7.900-5.200z"/><path d="M11 8.100l11.700-3.100v11.400l-11.300 5.800"/><path d="M3.500 4.400L13 2.700l9.700 2.300"/><path d="M13 2.700v10.800M3.500 17l9.500-3.500l9.700 2.900" stroke-width=".7"/></g></svg>
<svg style="left:135px;top:151.5px" width="24" height="24" viewBox="0 0 24 24"><path d="M3.500 4.400l5 2.500v6.500l-5-2.600z" fill="#5fb23f"/><path d="M3.500 4.400l5.500-1l4 1.600l-4.500 1.900z" fill="#7cc862"/><path d="M8.500 6.900l3.500-1v6l-3.500 1.500z" fill="#9dd389"/><path d="M14 7.300l8.700-2.300v9.400L14 18.200z" fill="#9dd389"/><g fill="none" stroke="#85845d" stroke-width=".85" stroke-linejoin="round"><path d="M3.500 4.400l7.500 3.700l.4 14.100l-7.900-5.200z"/><path d="M11 8.100l11.700-3.100v11.400l-11.300 5.800"/><path d="M3.500 4.400L13 2.700l9.700 2.300"/><path d="M13 2.700v10.800M3.500 17l9.500-3.500l9.700 2.900" stroke-width=".7"/></g></svg>
<svg style="left:165px;top:151.5px" width="24" height="24" viewBox="0 0 24 24"><path d="M3.500 4.400l7.500 3.700l.4 14.100l-7.900-5.200z" fill="#ececec"/><path d="M11 8.100l11.700-3.100v11.400l-11.300 5.800z" fill="#f5f5f5"/><path d="M8 8.500l5 2.200v6.300l-5-2.400z" fill="#9a9a9a"/><path d="M13 10.700l5.500-1.700v6.200L13 17z" fill="#c6c6c6"/><path d="M8 8.500l5.500-1.500l5 2L13 10.700z" fill="#b2b2b2"/><g fill="none" stroke="#c4c4c4" stroke-width=".85" stroke-linejoin="round"><path d="M3.500 4.400l7.500 3.700l.4 14.100l-7.900-5.200z"/><path d="M11 8.100l11.700-3.100v11.400l-11.300 5.800"/><path d="M3.500 4.400L13 2.700l9.700 2.300"/><path d="M13 2.700v10.800M3.500 17l9.500-3.500l9.700 2.900" stroke-width=".7"/></g></svg>
<svg style="left:195px;top:151.5px" width="24" height="24" viewBox="0 0 24 24"><circle cx="12" cy="12" r="9" fill="#d2e6f8" stroke="#8aa9c6" stroke-width=".8"/><ellipse cx="12" cy="12" rx="9" ry="3.800" fill="none" stroke="#8aa9c6" stroke-width=".7"/><ellipse cx="12" cy="12" rx="3.800" ry="9" fill="none" stroke="#8aa9c6" stroke-width=".7"/><g fill="#9dd389" stroke="#6f9a5c" stroke-width=".6"><circle cx="12" cy="2.800" r="1.700"/><circle cx="12" cy="21.200" r="1.700"/><circle cx="2.800" cy="12" r="1.700"/><circle cx="21.200" cy="12" r="1.700"/><circle cx="8" cy="8.200" r="1.400"/><circle cx="16" cy="8.200" r="1.400"/><circle cx="8" cy="15.800" r="1.400"/><circle cx="16" cy="15.800" r="1.400"/></g></svg>
<svg style="left:225px;top:151.5px" width="24" height="24" viewBox="0 0 24 24"><circle cx="9" cy="12" r="4" fill="#cbcbcb" stroke="#bdbdbd" stroke-width=".6"/><g fill="none" stroke="#c4c4c4" stroke-width="1"><path d="M3.500 4.500q4-2 8 .6q2.500 1.400 9.500 1.200"/><path d="M3.500 7.500q4-2.500 7.500-.3q3 1.600 10 1.500"/><path d="M3.500 16.500q4 2.500 7.500.3q3-1.600 10-1.500"/><path d="M3.500 19.500q4 2 8-.6q2.500-1.400 9.500-1.200"/></g></svg>
<svg style="left:255px;top:151.5px" width="24" height="24" viewBox="0 0 24 24"><path d="M3 19.500v-5.500q0-1.200 1.400-1.400q5.500-.6 9-7.400l6.600 3q-3.400 8.200-11 11.300z" fill="#c9c9c9" stroke="#bdbdbd" stroke-width=".7"/><path d="M9 19.500l12-8v8z" fill="#ececec" stroke="#c9c9c9" stroke-width=".7"/></svg>
<svg style="left:285px;top:151.5px" width="24" height="24" viewBox="0 0 24 24"><circle cx="12" cy="12" r="8.600" fill="#f6f6f6" stroke="#7d7d75" stroke-width="1"/><circle cx="15" cy="13.500" r="3.600" fill="#9dd389" stroke="#6f9a5c" stroke-width=".7"/><circle cx="8.300" cy="15.300" r="1.700" fill="#7fba66" stroke="#6f9a5c" stroke-width=".5"/><circle cx="8.600" cy="8.600" r="2" fill="#d8eef0" stroke="#9ab9bb" stroke-width=".6"/></svg>
<svg style="left:315px;top:151.5px" width="24" height="24" viewBox="0 0 24 24"><circle cx="13" cy="13" r="8.600" fill="#f6f6f6" stroke="#7d7d75" stroke-width="1"/><circle cx="16" cy="14.500" r="3.600" fill="#9dd389" stroke="#6f9a5c" stroke-width=".7"/><circle cx="9.300" cy="16.300" r="1.700" fill="#7fba66" stroke="#6f9a5c" stroke-width=".5"/><circle cx="4.500" cy="3.800" r="2.200" fill="#d8eef0" stroke="#8aa9ab" stroke-width=".7"/></svg>
<i class="handle" style="left:350px;top:155px"></i>
<svg style="left:360px;top:151.5px" width="24" height="24" viewBox="0 0 24 24"><path d="M4.500 2.500v17.500h16" fill="none" stroke="#77765a" stroke-width="1.300"/><path d="M12.500 4v14.500" stroke="#2b8bd8" stroke-width="1"/><rect x="10.400" y="7.500" width="4.200" height="6" rx="1" fill="#cfe6fb" stroke="#2b8bd8" stroke-width="1"/><path d="M10.400 10.500h4.200" stroke="#2b8bd8" stroke-width="1"/><circle cx="12.500" cy="4.500" r="1.200" fill="#2b8bd8"/><circle cx="12.500" cy="17.500" r="1.200" fill="#2b8bd8"/></svg>
<svg style="left:390px;top:151.5px" width="24" height="24" viewBox="0 0 24 24"><path d="M3.500 3.500h14v8.500h-5.500v6h-8.500z" fill="#d4e6f7" stroke="#7d9bb8" stroke-width="1.100" stroke-linejoin="round"/><rect x="13.800" y="13.800" width="7.400" height="7.400" fill="#9dd389" stroke="#8cc178" stroke-width="1.200" stroke-dasharray="1.600 1"/></svg>
<svg style="left:421px;top:151.5px" width="24" height="24" viewBox="0 0 24 24"><path d="M2.500 1.500v20.500h20" fill="none" stroke="#6b6a55" stroke-width="1.400"/><rect x="4.500" y="17" width="2.600" height="4.300" fill="#3069c4"/><rect x="7.100" y="10.500" width="3.200" height="10.800" fill="#1e8ff0"/><rect x="10.300" y="5.500" width="2.600" height="15.800" fill="#55b79a"/><rect x="12.900" y="1.800" width="2.600" height="19.500" fill="#3fa64a"/><rect x="15.500" y="8" width="2.600" height="13.300" fill="#9ccc2f"/><rect x="18.100" y="12.500" width="2.600" height="8.800" fill="#f7d61c"/><rect x="20.700" y="16" width="2.300" height="5.300" fill="#f5a623"/></svg>
<svg style="left:451px;top:151.5px" width="24" height="24" viewBox="0 0 24 24"><circle cx="7" cy="7.500" r="4.300" fill="#f7f7f7" stroke="#8d8d8d" stroke-width="1.100"/><path d="M7 5v2.800l2 1.200" fill="none" stroke="#2a78c8" stroke-width="1.100"/><circle cx="17" cy="7.500" r="4" fill="#b89a5a" stroke="#e0a52a" stroke-width="1.300"/><path d="M3 18h2l1-2.500l1.200 4l1.200-5l1.300 5.500l1.200-5l1.200 4.500l1.200-4l1.200 4l1.200-3.500l1.200 3l1-1.500h2" fill="none" stroke="#2a78c8" stroke-width="1.100"/><path d="M3 21.300h18" stroke="#b0b0b0" stroke-width="1"/></svg>
<svg style="left:481px;top:151.5px" width="24" height="24" viewBox="0 0 24 24"><path d="M3.500 4l13-1.500l4.500 5.500l-3 13l-12.500-2.500z" fill="#86c46c" stroke="#5f9a4c" stroke-width=".9"/><path d="M4 20L21 5" stroke="#2a78c8" stroke-width="1.400"/><path d="M5 17.500l1.500-2.800l1 2.600l1.600-4.600l1 3l1.700-4.800l1 2.800l1.700-4.600l1 2.400l1.800-4l.8 1.600" fill="none" stroke="#2a78c8" stroke-width="1"/><path d="M2.500 14l2.500.8M15.500 2.500l2 2" stroke="#6b6a45" stroke-width="1"/></svg>
<svg style="left:511px;top:151.5px" width="24" height="24" viewBox="0 0 24 24"><circle cx="7" cy="7.500" r="4.300" fill="#f7f7f7" stroke="#8d8d8d" stroke-width="1.100"/><path d="M7 5v2.800l2 1.200" fill="none" stroke="#2a78c8" stroke-width="1.100"/><rect x="13.300" y="3.500" width="7.600" height="7.600" fill="#e7f4e0" stroke="#8a8a8a" stroke-width="1" stroke-dasharray="1.600 1.200"/><path d="M17.100 5l2 4h-4z" fill="#9dd389"/><path d="M3 18h2l1-2.500l1.200 4l1.200-5l1.300 5.500l1.200-5l1.200 4.500l1.200-4l1.200 4l1.200-3.500l1.200 3l1-1.500h2" fill="none" stroke="#2a78c8" stroke-width="1.100"/><path d="M3 21.300h18" stroke="#b0b0b0" stroke-width="1"/></svg>
<svg style="left:541px;top:151.5px" width="24" height="24" viewBox="0 0 24 24"><path d="M3.500 4.500L12 2l8.500 2.500v10q-1.500 5-8.500 7.500q-7-2.500-8.500-7.500z" fill="#d4e6f7" stroke="#a9c3dc" stroke-width="1"/><path d="M12 5.500v13M6.500 8.500l11 7M17.500 8.500l-11 7" stroke="#4d5a66" stroke-width="1.100"/></svg>
<svg style="left:572px;top:151.5px" width="24" height="24" viewBox="0 0 24 24"><text x="-.5" y="17.500" font-family="Liberation Sans" font-size="19" fill="#6a6a6a">{</text><text x="17.500" y="17.500" font-family="Liberation Sans" font-size="19" fill="#6a6a6a">}</text><circle cx="8.200" cy="16" r="1.150" fill="#2b8bd8"/><circle cx="12" cy="16" r="1.150" fill="#2b8bd8"/><circle cx="15.800" cy="16" r="1.150" fill="#2b8bd8"/></svg>
<i class="handle" style="left:605px;top:155px"></i>
<svg style="left:616px;top:151.5px" width="24" height="24" viewBox="0 0 24 24"><g transform="rotate(-40 12 12)"><rect x=".5" y="8.500" width="23" height="7" rx=".8" fill="#f2b90f" stroke="#d49d0a" stroke-width=".8"/><path d="M4 8.500v3M7 8.500v2M10 8.500v3M13 8.500v2M16 8.500v3M19 8.500v2" stroke="#b98800" stroke-width=".8"/></g></svg>
<svg style="left:646px;top:151.5px" width="24" height="24" viewBox="0 0 24 24"><g transform="rotate(-28 12 12)"><path d="M1.500 17a10.500 10.500 0 0 1 21 0v2.500h-21z" fill="#f2b90f" stroke="#d49d0a" stroke-width=".8"/><path d="M6.500 16.500a5.500 5.500 0 0 1 11 0z" fill="#f5f5f5" stroke="#d49d0a" stroke-width=".8"/><path d="M12 7v2.200M5 10l1.500 1.500M19 10l-1.500 1.500M3 14.500h2M21 14.500h-2" stroke="#b98800" stroke-width=".8"/></g></svg>
<!-- ======= LEFT PANELS ======= -->
<div class="a" style="left:0;top:180px;width:1754px;height:2px;background:#d2d2d2"></div>
<div class="a" style="left:0;top:29px;width:1px;height:931px;background:#1a1a1a"></div>
<div class="a" style="left:1753px;top:29px;width:1px;height:931px;background:#1a1a1a"></div>
<div class="a" style="left:1px;top:182px;width:396px;height:18px;background:linear-gradient(#f4f4f4,#ececec)"></div>
<span class="t " style="left:5px;top:185px;">Pipeline Browser</span>
<svg style="left:370px;top:186px" width="24" height="10" viewBox="0 0 24 10"><rect x=".5" y=".5" width="9" height="8.500" rx="1.500" fill="none" stroke="#555" stroke-width="1"/><rect x="2.500" y="4" width="4" height="3.200" fill="none" stroke="#555" stroke-width=".9"/><path d="M4 4V2.500h3.800v3.200H6.500" fill="none" stroke="#555" stroke-width=".9"/><rect x="13.500" y=".5" width="9" height="8.500" rx="1.500" fill="none" stroke="#555" stroke-width="1"/><path d="M15.800 2.600l4.400 4.400M20.200 2.600l-4.400 4.400" stroke="#444" stroke-width="1.300"/></svg>
<div class="a" style="left:1px;top:200px;width:394px;height:272px;background:#fff;border:1px solid #c2c2c2"></div>
<svg style="left:33px;top:201px" width="3" height="86" viewBox="0 0 3 86"><path d="M1.500 0V86" stroke="#7d7d7d" stroke-width="1" stroke-dasharray="5 3.500"/></svg>
<svg style="left:27px;top:206px" width="14" height="14" viewBox="0 0 14 14"><rect x="3.500" y=".6" width="7" height="12.800" rx=".8" fill="#bdbdbd" stroke="#1c1c1c" stroke-width="1.100"/><rect x="4.100" y="1.200" width="5.800" height="4" fill="#ececec"/><rect x="4.100" y="9" width="5.800" height="3.800" fill="#949494"/><rect x="5" y="2" width="4" height="2.200" fill="#222"/><path d="M5 6.200h4M5 8h4" stroke="#666" stroke-width=".7"/></svg>
<span class="t " style="left:44px;top:206px;">builtin:</span>
<div class="a" style="left:26px;top:224px;width:53px;height:17px;background:#308cc6"></div>
<svg style="left:26px;top:225px" width="15" height="15" viewBox="0 0 15 15"><path d="M.6 2.800L5.800 1l9 2.700v7.400L6.900 13.200L1.100 10.600z" fill="#4f8f3c" stroke="#5d6444" stroke-width=".8" stroke-linejoin="round"/><path d="M6.400 5.800L14.800 3.700v7.400L6.900 13.200z" fill="#93da78"/><path d="M8.300 7l4.800-1.100v4.200L8.600 11.300z" fill="#b4eaa0" opacity=".8"/><path d="M.6 2.800L6.400 5.800L14.800 3.700L5.800 1z" fill="#6fb555"/><path d="M.6 2.800L6.400 5.800L14.800 3.700M6.400 5.800L6.900 13.200" fill="none" stroke="#5d6444" stroke-width=".7"/></svg>
<span class="t " style="left:44px;top:226px;color:#fff">test.e</span>
<svg style="left:26px;top:245px" width="15" height="15" viewBox="0 0 15 15"><path d="M.6 2.800L5.800 1l9 2.700v7.400L6.900 13.200L1.100 10.600z" fill="#4f8f3c" stroke="#5d6444" stroke-width=".8" stroke-linejoin="round"/><path d="M6.400 5.800L14.800 3.700v7.400L6.900 13.200z" fill="#93da78"/><path d="M8.300 7l4.800-1.100v4.200L8.600 11.300z" fill="#b4eaa0" opacity=".8"/><path d="M.6 2.800L6.400 5.800L14.800 3.700L5.800 1z" fill="#6fb555"/><path d="M.6 2.800L6.400 5.800L14.800 3.700M6.400 5.800L6.900 13.200" fill="none" stroke="#5d6444" stroke-width=".7"/></svg>
<span class="t " style="left:44px;top:246px;">GenerateTimeSteps1</span>
<svg style="left:26px;top:265px" width="15" height="15" viewBox="0 0 15 15"><path d="M.6 2.800L5.800 1l9 2.700v7.400L6.900 13.200L1.100 10.600z" fill="#4f8f3c" stroke="#5d6444" stroke-width=".8" stroke-linejoin="round"/><path d="M6.400 5.800L14.800 3.700v7.400L6.900 13.200z" fill="#93da78"/><path d="M8.300 7l4.800-1.100v4.200L8.600 11.300z" fill="#b4eaa0" opacity=".8"/><path d="M.6 2.800L6.400 5.800L14.800 3.700L5.800 1z" fill="#6fb555"/><path d="M.6 2.800L6.400 5.800L14.800 3.700M6.400 5.800L6.900 13.200" fill="none" stroke="#5d6444" stroke-width=".7"/></svg>
<span class="t " style="left:44px;top:266px;">PythonCalculator1</span>
<svg style="left:5px;top:287px" width="14" height="12" viewBox="0 0 14 12"><path d="M.500 6q6.500-7 13 0q-6.500 7-13 0z" fill="#fff" stroke="#6d6d6d" stroke-width=".9"/><circle cx="7" cy="5.800" r="3" fill="#1d5fae"/><circle cx="7" cy="5.800" r="1.400" fill="#0c1c33"/><circle cx="6" cy="4.800" r=".8" fill="#fff"/></svg>
<svg style="left:25px;top:285px" width="16" height="15" viewBox="0 0 16 15"><path d="M1.500 .5v13h13" fill="none" stroke="#4a4a3a" stroke-width="1"/><path d="M2.500 10l2-3l1.500 3.500l2-6l1.500 4l1.500-3l1.500 2l1.500-3.500" fill="none" stroke="#2a78c8" stroke-width="1"/></svg>
<span class="t " style="left:44px;top:286px;">PlotSelectionOverTime1</span>
<div class="a" style="left:191px;top:474px;width:16px;height:2px;background-image:radial-gradient(circle at 1px 1px,#bdbdbd .6px,transparent .9px);background-size:3px 3px"></div>
<div class="a" style="left:2px;top:500px;width:394px;height:1px;background:#c6c6c6"></div>
<div class="a" style="left:2px;top:478px;width:76px;height:23px;background:#f3f3f3;border:1px solid #c4c4c4;border-bottom:none;border-radius:3px 3px 0 0"></div>
<span class="t " style="left:12px;top:484px;">Properties</span>
<div class="a" style="left:79px;top:480px;width:85px;height:20px;background:linear-gradient(#e4e4e4,#dadada);border:1px solid #c4c4c4;border-bottom:none;border-radius:3px 3px 0 0"></div>
<span class="t " style="left:89px;top:485px;">Information</span>
<span class="t " style="left:5px;top:505px;">Properties</span>
<svg style="left:370px;top:506px" width="24" height="10" viewBox="0 0 24 10"><rect x=".5" y=".5" width="9" height="8.500" rx="1.500" fill="none" stroke="#555" stroke-width="1"/><rect x="2.500" y="4" width="4" height="3.200" fill="none" stroke="#555" stroke-width=".9"/><path d="M4 4V2.500h3.800v3.200H6.500" fill="none" stroke="#555" stroke-width=".9"/><rect x="13.500" y=".5" width="9" height="8.500" rx="1.500" fill="none" stroke="#555" stroke-width="1"/><path d="M15.800 2.600l4.400 4.400M20.200 2.600l-4.400 4.400" stroke="#444" stroke-width="1.300"/></svg>
<div class="btn d" style="left:9px;top:528px;width:93px;height:22px"><svg style="left:23px;top:3px" width="13" height="14" viewBox="0 0 13 14"><path d="M1 6l3-1.500l3 .8v5.700l-3 1.500l-3-.9z" fill="#c9c9c9" stroke="#b5b5b5" stroke-width=".6"/><path d="M6 6.500l3-3.800l-1.500-1.100l4.500-1.100l-.5 4.700l-1.400-1.100l-2.800 3.600z" fill="#cfcfcf" stroke="#b9b9b9" stroke-width=".5"/></svg><span class="t" style="left:38px;top:4px">Apply</span></div>
<div class="btn d" style="left:104px;top:528px;width:93px;height:22px"><svg style="left:22px;top:4px" width="13" height="13" viewBox="0 0 13 13"><circle cx="6.500" cy="6.500" r="5.100" fill="none" stroke="#8a8a8a" stroke-width="2.100"/><path d="M2.900 10.100L10.100 2.900" stroke="#8a8a8a" stroke-width="2.100"/></svg><span class="t" style="left:38px;top:4px">Reset</span></div>
<div class="btn d" style="left:199px;top:528px;width:93px;height:22px"><span class="t" style="left:19px;top:3px;color:#8a8a8a;font-size:15px;-webkit-text-stroke:.4px #8a8a8a">&#10006;</span><span class="t" style="left:35px;top:4px">Delete</span></div>
<div class="btn " style="left:294px;top:528px;width:93px;height:22px"><span class="t" style="left:40px;top:1px;font-size:18px;font-weight:normal;color:#86b56a;line-height:20px;height:20px;-webkit-text-stroke:.7px #86b56a">?</span></div>
<div class="inp" style="left:9px;top:555px;width:354px;height:21px"><span class="t" style="left:3px;top:4px;color:#9a9a9a">Search ... (use Esc to clear text)</span></div>
<div class="a" style="left:365px;top:555px;width:22px;height:21px;background:#dedede;border:1px solid #cfcfcf;border-radius:3px"><svg style="left:4px;top:3px" width="13" height="13" viewBox="0 0 13 13"><path d="M12.31 5.49L12.31 7.51L10.68 7.50L10.17 8.75L11.33 9.89L9.89 11.33L8.75 10.17L7.50 10.68L7.51 12.31L5.49 12.31L5.50 10.68L4.25 10.17L3.11 11.33L1.67 9.89L2.83 8.75L2.32 7.50L0.69 7.51L0.69 5.49L2.32 5.50L2.83 4.25L1.67 3.11L3.11 1.67L4.25 2.83L5.50 2.32L5.49 0.69L7.51 0.69L7.50 2.32L8.75 2.83L9.89 1.67L11.33 3.11L10.17 4.25L10.68 5.50z" fill="none" stroke="#a9a9a9" stroke-width="1.1" stroke-linejoin="round"/><circle cx="6.5" cy="6.5" r="2.0" fill="none" stroke="#a9a9a9" stroke-width="1.1"/></svg></div>
<div class="a" style="left:374px;top:581px;width:13px;height:369px;background:#e0e0e0;border-left:1px solid #cacaca"></div>
<div class="a" style="left:375px;top:581px;width:12px;height:13px;background:#f5f5f5;border-bottom:1px solid #d0d0d0"><i class="arr" style="left:2px;top:4px;border-top:none;border-bottom:4px solid #333"></i></div>
<div class="a" style="left:375px;top:654px;width:12px;height:46px;background:#fcfcfc;border-top:1px solid #c8c8c8;border-bottom:1px solid #c8c8c8"></div>
<div class="a" style="left:375px;top:937px;width:12px;height:13px;background:#f5f5f5;border-top:1px solid #d0d0d0"><i class="arr" style="left:2px;top:5px;border-top-color:#333"></i></div>
<div class="cb" style="left:9px;top:581px"><svg width="11" height="11" viewBox="0 0 11 11"><path d="M2.200 5.400l2.300 3.100l4.300-6.600" fill="none" stroke="#000" stroke-width="1.700"/></svg></div>
<span class="t " style="left:27px;top:582px;">Apply Displacements</span>
<span class="t " style="left:9px;top:602px;">Displacement</span>
<span class="t " style="left:9px;top:615px;">Magnitude</span>
<div class="inp" style="left:88px;top:604px;width:286px;height:21px"><span class="t" style="left:3px;top:4px">1</span></div>
<div class="cb" style="left:9px;top:634px"><svg width="11" height="11" viewBox="0 0 11 11"><path d="M2.200 5.400l2.300 3.100l4.300-6.600" fill="none" stroke="#000" stroke-width="1.700"/></svg></div>
<span class="t " style="left:27px;top:635px;">Remove Unused Points</span>
<div class="cb" style="left:9px;top:657px"></div>
<span class="t " style="left:27px;top:657px;">Generate File Id</span>
<div class="cb" style="left:9px;top:680px"><svg width="11" height="11" viewBox="0 0 11 11"><path d="M2.200 5.400l2.300 3.100l4.300-6.600" fill="none" stroke="#000" stroke-width="1.700"/></svg></div>
<span class="t " style="left:27px;top:680px;">Read Ids</span>
<div class="cb" style="left:9px;top:702px"><svg width="11" height="11" viewBox="0 0 11 11"><path d="M2.200 5.400l2.300 3.100l4.300-6.600" fill="none" stroke="#000" stroke-width="1.700"/></svg></div>
<span class="t " style="left:27px;top:703px;">Read Global Fields</span>
<div class="cb" style="left:9px;top:725px"><svg width="11" height="11" viewBox="0 0 11 11"><path d="M2.200 5.400l2.300 3.100l4.300-6.600" fill="none" stroke="#000" stroke-width="1.700"/></svg></div>
<span class="t " style="left:27px;top:726px;">Read QA And Information Records</span>
<div class="hdr" style="left:9px;top:747px;width:249px;height:24px"><i class="minus"></i><span class="t" style="left:28px;top:5px">Display</span></div>
<div class="hdr" style="left:9px;top:782px;width:249px;height:23px"><i class="minus"></i><span class="t" style="left:28px;top:5px">View (Quartile Chart View)</span></div>
<div class="btn d" style="left:261px;top:748px;width:25px;height:23px"><svg style="left:5px;top:4px" width="14" height="14" viewBox="0 0 14 14"><rect x="1" y="2.500" width="8" height="9.500" fill="#e0e0e0" stroke="#c2c2c2" stroke-width=".8"/><rect x="5" y="1" width="8" height="9.500" fill="#e6e6e6" stroke="#c2c2c2" stroke-width=".8"/><path d="M6.500 3.500h5M6.500 5.500h5M6.500 7.500h5" stroke="#c2c2c2" stroke-width=".7"/></svg></div>
<div class="btn d" style="left:290px;top:748px;width:25px;height:23px"><svg style="left:5px;top:4px" width="14" height="14" viewBox="0 0 14 14"><rect x="1.500" y="2" width="9" height="11" rx="1" fill="#d8d8d8" stroke="#c4c4c4" stroke-width=".8"/><rect x="4" y=".8" width="4" height="2.400" fill="#c4c4c4"/><rect x="5.500" y="5" width="7.500" height="8.500" fill="#ececec" stroke="#c4c4c4" stroke-width=".8"/></svg></div>
<div class="btn d" style="left:319px;top:748px;width:25px;height:23px"><svg style="left:5px;top:4px" width="14" height="14" viewBox="0 0 14 14"><path d="M11.800 5.500A5 5 0 0 0 2.700 4.500" fill="none" stroke="#b5b5b5" stroke-width="1.900"/><path d="M.8 2.200v4.300h4.300z" fill="#b5b5b5" transform="rotate(-8 3 4)"/><path d="M2.200 8.500A5 5 0 0 0 11.300 9.500" fill="none" stroke="#b5b5b5" stroke-width="1.900"/><path d="M13.200 11.800V7.500H8.900z" fill="#b5b5b5" transform="rotate(-8 11 10)"/></svg></div>
<div class="btn d" style="left:348px;top:748px;width:25px;height:23px"><svg style="left:5px;top:4px" width="14" height="14" viewBox="0 0 14 14"><path d="M1 1h10.500L13 2.500V13H1z" fill="#b9b9b9"/><rect x="3.500" y="1" width="6.500" height="4.800" fill="#ececec"/><rect x="7.500" y="1.800" width="1.600" height="3" fill="#b9b9b9"/><rect x="3" y="8.500" width="8" height="4.500" fill="#a9a9a9"/><rect x="4" y="10.300" width="2.200" height="1.600" fill="#ececec"/></svg></div>
<div class="btn" style="left:261px;top:782px;width:25px;height:23px"><svg style="left:5px;top:4px" width="14" height="14" viewBox="0 0 14 14"><rect x="1" y="2.500" width="8" height="9.500" fill="#d4d4d4" stroke="#9a9a9a" stroke-width=".8"/><rect x="5" y="1" width="8" height="9.500" fill="#e6e6e6" stroke="#9a9a9a" stroke-width=".8"/><path d="M6.500 3.500h5M6.500 5.500h5M6.500 7.500h5" stroke="#9a9a9a" stroke-width=".7"/></svg></div>
<div class="btn d" style="left:290px;top:782px;width:25px;height:23px"><svg style="left:5px;top:4px" width="14" height="14" viewBox="0 0 14 14"><rect x="1.500" y="2" width="9" height="11" rx="1" fill="#d8d8d8" stroke="#c4c4c4" stroke-width=".8"/><rect x="4" y=".8" width="4" height="2.400" fill="#c4c4c4"/><rect x="5.500" y="5" width="7.500" height="8.500" fill="#ececec" stroke="#c4c4c4" stroke-width=".8"/></svg></div>
<div class="btn" style="left:319px;top:782px;width:25px;height:23px"><svg style="left:5px;top:4px" width="14" height="14" viewBox="0 0 14 14"><path d="M11.800 5.500A5 5 0 0 0 2.700 4.500" fill="none" stroke="#2a7fc4" stroke-width="1.900"/><path d="M.8 2.200v4.300h4.300z" fill="#2a7fc4" transform="rotate(-8 3 4)"/><path d="M2.200 8.500A5 5 0 0 0 11.300 9.500" fill="none" stroke="#2a7fc4" stroke-width="1.900"/><path d="M13.200 11.800V7.500H8.900z" fill="#2a7fc4" transform="rotate(-8 11 10)"/></svg></div>
<div class="btn" style="left:348px;top:782px;width:25px;height:23px"><svg style="left:5px;top:4px" width="14" height="14" viewBox="0 0 14 14"><path d="M1 1h10.500L13 2.500V13H1z" fill="#2d5f9e"/><rect x="3.500" y="1" width="6.500" height="4.800" fill="#e8eef6"/><rect x="7.500" y="1.800" width="1.600" height="3" fill="#2d5f9e"/><rect x="3" y="8.500" width="8" height="4.500" fill="#1c3f73"/><rect x="4" y="10.300" width="2.200" height="1.600" fill="#e8eef6"/></svg></div>
<span class="t b" style="left:9px;top:815px;">Title</span>
<div class="hline" style="left:9px;top:828px;width:365px"></div>
<span class="t " style="left:9px;top:839px;">Chart Title</span>
<div class="inp" style="left:112px;top:835px;width:262px;height:20px"><span class="t" style="left:3px;top:3px;color:#9a9a9a">Use {time} to display current time</span></div>
<span class="t b" style="left:9px;top:863px;">Chart Title Properties</span>
<div class="hline" style="left:9px;top:876px;width:365px"></div>
<div class="cmb" style="left:9px;top:883px;width:191px;height:21px"><span class="t" style="left:5px;top:4px">Arial</span><i class="arr" style="left:176px;top:8px"></i></div>
<div class="inp" style="left:203px;top:883px;width:47px;height:21px;border-color:#c0c0c0;border-radius:3px"><span class="t" style="left:5px;top:4px">18</span><svg style="left:36px;top:4px" width="8" height="12" viewBox="0 0 8 12"><path d="M1 4.500L4 1l3 3.500z" fill="#4a4a4a"/><path d="M1 7.500L4 11l3-3.500z" fill="#4a4a4a"/></svg></div>
<div class="btn" style="left:253px;top:883px;width:34px;height:21px;border-radius:3px 0 0 3px"><i class="a" style="left:4px;top:3px;width:13px;height:13px;border-radius:50%;background:#000"></i></div>
<div class="btn" style="left:287px;top:883px;width:11px;height:21px;border-radius:0 3px 3px 0;border-left-color:#dadada"><i class="arr" style="left:1px;top:8px;border-left-width:3.5px;border-right-width:3.5px"></i></div>
<div class="btn" style="left:301px;top:883px;width:23px;height:21px"><span class="t" style="left:4px;top:1px;font-size:16.500px;font-weight:bold;line-height:18px;height:18px">B</span></div>
<div class="btn" style="left:326px;top:883px;width:23px;height:21px"><span class="t" style="left:7px;top:1px;font-size:16.500px;font-weight:bold;font-style:italic;line-height:18px;height:18px">I</span></div>
<div class="btn" style="left:352px;top:883px;width:22px;height:21px"><svg style="left:4px;top:4px" width="14" height="13" viewBox="0 0 14 13"><path d="M2 1.500h10M1 4h11M2 6.500h10M1 9h11" stroke="#a2a2a2" stroke-width="1.600"/><path d="M10 10.500h3.600l-1.800 2.200z" fill="#333"/></svg></div>
<span class="t b" style="left:9px;top:913px;">Annotation</span>
<div class="hline" style="left:9px;top:926px;width:365px"></div>
<div class="cb" style="left:9px;top:935px"><svg width="11" height="11" viewBox="0 0 11 11"><path d="M2.200 5.400l2.300 3.100l4.300-6.600" fill="none" stroke="#000" stroke-width="1.700"/></svg></div>
<span class="t " style="left:27px;top:936px;">Show Legend</span>
<!-- ======= CENTER: LAYOUT / VIEWS ======= -->
<div class="a" style="left:401px;top:206px;width:842px;height:752px;border:1px solid #c1c1c6;background:#fdfdfd"></div>
<div class="a" style="left:402px;top:207px;width:840px;height:25px;background:#efefef"></div>
<div class="a" style="left:819px;top:207px;width:4px;height:750px;background:#efefef"></div>
<div class="a" style="left:401px;top:182px;width:112px;height:25px;background:#fbfbfb;border:1px solid #c4c4c4;border-bottom:none;border-radius:3px 3px 0 0"></div>
<svg style="left:411px;top:188px" width="15" height="14" viewBox="0 0 15 14"><rect x=".9" y=".9" width="13.200" height="12.200" fill="#fff" stroke="#1f2326" stroke-width="1.500"/><rect x=".9" y=".5" width="13.200" height="3" fill="#1f2326"/></svg>
<span class="t " style="left:430px;top:190px;">Layout #1</span>
<svg style="left:490px;top:190px" width="11" height="11" viewBox="0 0 11 11"><rect x=".5" y=".5" width="9.500" height="9.500" rx="1.800" fill="#f4f4f4" stroke="#6b6b6b" stroke-width="1"/><path d="M3 3l4.500 4.500M7.500 3L3 7.500" stroke="#333" stroke-width="1.400"/></svg>
<div class="a" style="left:513px;top:184px;width:31px;height:22px;background:#f1efef;border:1px solid #cbcbcb;border-bottom:none;border-radius:3px 3px 0 0"></div>
<span class="t " style="left:524px;top:190px;">+</span>
<svg style="left:406px;top:210px" width="18" height="18" viewBox="0 0 18 18"><rect x="1.500" y="4" width="13" height="9.500" rx="1.500" fill="#cfcfcf" stroke="#a5a5a5" stroke-width=".8"/><rect x="5" y="2.400" width="5" height="2" fill="#a5a5a5"/><circle cx="8" cy="8.700" r="3.300" fill="#dcecf8" stroke="#a5a5a5" stroke-width=".8"/><circle cx="8" cy="8.700" r="1.600" fill="#9fc6ea"/><path d="M.5 11.500l.8 6l2.200-1.800q3.600 2.400 6.400-.4q1.800-2.800-1-4.800q1.400 2.600-.8 3.700q-1.400.5-2.700-.5l2.100-1.700z" fill="#e8151b"/></svg>
<svg style="left:430px;top:210px" width="18" height="18" viewBox="0 0 18 18"><rect x="1.500" y="4" width="13" height="9.500" rx="1.500" fill="#dedede" stroke="#c6c6c6" stroke-width=".8"/><rect x="5" y="2.400" width="5" height="2" fill="#c6c6c6"/><circle cx="8" cy="8.700" r="3.300" fill="#ececec" stroke="#c6c6c6" stroke-width=".8"/><circle cx="8" cy="8.700" r="1.600" fill="#e0e0e0"/><path d="M15 12.500l-.6 4.600l-1.700-1.400q-3 2-5.300-.3q-1.500-2.200.8-3.800q-1.200 2 .6 2.900q1.200.4 2.300-.4l-1.700-1.400z" fill="#cdcdcd"/></svg>
<i class="a" style="left:454px;top:211px;width:1px;height:16px;background:#dedede"></i>
<svg style="left:458px;top:210px" width="18" height="18" viewBox="0 0 18 18"><g transform="translate(1 .5)"><rect x="1.500" y="4" width="13" height="9.500" rx="1.500" fill="#c9c9c9" stroke="#8f8f8f" stroke-width=".8"/><rect x="5" y="2.400" width="5" height="2" fill="#8f8f8f"/><circle cx="8" cy="8.700" r="3.300" fill="#e6f1fa" stroke="#8f8f8f" stroke-width=".8"/><circle cx="8" cy="8.700" r="1.600" fill="#a9cdee"/></g><path d="M1 4V1.500h2.500M14.500 1.500H17V4M1 14v2.500h2.500M14.500 16.500H17V14" fill="none" stroke="#9a9a9a" stroke-width="1"/></svg>
<i class="a" style="left:482px;top:211px;width:1px;height:16px;background:#dedede"></i>
<span class="t " style="left:490px;top:212px;color:#5f5e47;font-size:10.5px;letter-spacing:0">2D</span>
<svg style="left:512px;top:209px" width="18" height="18" viewBox="0 0 18 18"><rect x="1.500" y="4" width="13" height="9.500" rx="1.500" fill="#dedede" stroke="#c8c8c8" stroke-width=".8"/><rect x="5" y="2.400" width="5" height="2" fill="#c8c8c8"/><circle cx="8" cy="8.700" r="3.300" fill="#ececec" stroke="#c8c8c8" stroke-width=".8"/><circle cx="8" cy="8.700" r="1.600" fill="#e2e2e2"/><circle cx="9" cy="8" r="3.200" fill="none" stroke="#bdbdbd" stroke-width="1.300"/><path d="M11.300 10.600l4.500 5" stroke="#bdbdbd" stroke-width="2" stroke-linecap="round"/></svg>
<i class="a" style="left:535px;top:211px;width:1px;height:16px;background:#dedede"></i>
<svg style="left:542px;top:211px" width="16" height="16" viewBox="0 0 16 16"><rect x=".5" y=".5" width="15" height="14" fill="none" stroke="#777" stroke-width=".9" stroke-dasharray="2 2"/><path d="M8 3.800v7.400M4.300 7.500h7.400" stroke="#6f9a5c" stroke-width="3.200"/><path d="M8 4.400v6.200M4.900 7.500h6.200" stroke="#9dd389" stroke-width="2"/></svg>
<svg style="left:566px;top:211px" width="16" height="16" viewBox="0 0 16 16"><rect x=".5" y=".5" width="15" height="14" fill="none" stroke="#777" stroke-width=".9" stroke-dasharray="2 2"/><path d="M4.200 7.500h7.600" stroke="#e8151b" stroke-width="2.400"/></svg>
<svg style="left:589px;top:211px" width="17" height="17" viewBox="0 0 17 17"><rect x=".5" y=".5" width="15" height="14" fill="none" stroke="#777" stroke-width=".9" stroke-dasharray="2 2"/><path d="M7 2v5.600M4.200 4.800h5.600" stroke="#6f9a5c" stroke-width="2.300"/><path d="M7 2.500v4.600M4.700 4.800h4.600" stroke="#9dd389" stroke-width="1.300"/><path d="M3.500 10.800h6.500" stroke="#e8151b" stroke-width="2.200"/><path d="M11.500 10.500l4 4.200l-1 .9l-1.200-1.300l-.6 1.700z" fill="#555"/></svg>
<i class="a" style="left:612px;top:211px;width:1px;height:16px;background:#dedede"></i>
<span class="t " style="left:632px;top:212px;font-size:12px;letter-spacing:-2.5px;color:#333">&#8250;&#8250;</span>
<span class="t " style="left:641px;top:213px;">RenderView1</span>
<div class="btn" style="left:723px;top:208px;width:23px;height:23px"></div>
<div class="btn" style="left:747.5px;top:208px;width:23px;height:23px"></div>
<div class="btn" style="left:772px;top:208px;width:23px;height:23px"></div>
<div class="btn" style="left:796.5px;top:208px;width:23px;height:23px"></div>
<svg style="left:728px;top:213px" width="13" height="12" viewBox="0 0 13 12"><rect x=".5" y=".5" width="12" height="11" fill="#d3daf0" stroke="#a9b4d0" stroke-width="1"/><path d="M6.500 .5v11" stroke="#a9b4d0" stroke-width="1"/></svg>
<svg style="left:752.5px;top:213px" width="13" height="12" viewBox="0 0 13 12"><rect x=".5" y=".5" width="12" height="11" fill="#d3daf0" stroke="#a9b4d0" stroke-width="1"/><path d="M.5 6h12" stroke="#a9b4d0" stroke-width="1"/></svg>
<svg style="left:775.5px;top:211px" width="16" height="16" viewBox="0 0 16 16"><rect x=".9" y=".9" width="14.200" height="14.200" fill="#fbfbfb" stroke="#1f2326" stroke-width="1.600"/><rect x=".9" y=".4" width="14.200" height="3.600" fill="#2b2f33"/></svg>
<svg style="left:803.0px;top:214px" width="11" height="11" viewBox="0 0 11 11"><rect x=".5" y=".5" width="9.500" height="9.500" rx="1.800" fill="#f4f4f4" stroke="#4f4f4f" stroke-width="1"/><path d="M3 3l4.500 4.500M7.500 3L3 7.500" stroke="#2b2b2b" stroke-width="1.500"/></svg>
<svg style="left:827px;top:210px" width="18" height="18" viewBox="0 0 18 18"><g transform="translate(1 .5)"><rect x="1.500" y="4" width="13" height="9.500" rx="1.500" fill="#c9c9c9" stroke="#8f8f8f" stroke-width=".8"/><rect x="5" y="2.400" width="5" height="2" fill="#8f8f8f"/><circle cx="8" cy="8.700" r="3.300" fill="#e6f1fa" stroke="#8f8f8f" stroke-width=".8"/><circle cx="8" cy="8.700" r="1.600" fill="#a9cdee"/></g><path d="M1 4V1.500h2.500M14.500 1.500H17V4M1 14v2.500h2.500M14.500 16.500H17V14" fill="none" stroke="#9a9a9a" stroke-width="1"/></svg>
<i class="a" style="left:850px;top:211px;width:1px;height:16px;background:#dedede"></i>
<svg style="left:857px;top:211px" width="16" height="16" viewBox="0 0 16 16"><rect x=".5" y=".5" width="15" height="14" fill="none" stroke="#777" stroke-width=".9" stroke-dasharray="2 2"/><path d="M8 3.800v7.400M4.300 7.500h7.400" stroke="#6f9a5c" stroke-width="3.200"/><path d="M8 4.400v6.200M4.900 7.500h6.200" stroke="#9dd389" stroke-width="2"/></svg>
<svg style="left:881px;top:211px" width="16" height="16" viewBox="0 0 16 16"><rect x=".5" y=".5" width="15" height="14" fill="none" stroke="#777" stroke-width=".9" stroke-dasharray="2 2"/><path d="M4.200 7.500h7.600" stroke="#e8151b" stroke-width="2.400"/></svg>
<svg style="left:904px;top:211px" width="17" height="17" viewBox="0 0 17 17"><rect x=".5" y=".5" width="15" height="14" fill="none" stroke="#777" stroke-width=".9" stroke-dasharray="2 2"/><path d="M7 2v5.600M4.200 4.800h5.600" stroke="#6f9a5c" stroke-width="2.300"/><path d="M7 2.500v4.600M4.700 4.800h4.600" stroke="#9dd389" stroke-width="1.300"/><path d="M3.500 10.800h6.500" stroke="#e8151b" stroke-width="2.200"/><path d="M11.500 10.500l4 4.200l-1 .9l-1.200-1.300l-.6 1.700z" fill="#555"/></svg>
<i class="a" style="left:927px;top:211px;width:1px;height:16px;background:#dedede"></i>
<svg style="left:933px;top:210px" width="17" height="17" viewBox="0 0 17 17"><path d="M3.500 2.500q5-2.500 10 .5q3 4 0 9q-5 4-10 .5q-3.500-5 0-10z" fill="none" stroke="#b5b5b5" stroke-width=".9" stroke-dasharray="2 1.600"/><g fill="#d9534f"><circle cx="5" cy="5" r="1.100"/><circle cx="9" cy="4" r="1.100"/><circle cx="12" cy="6.500" r="1.100"/><circle cx="7" cy="8.500" r="1.100"/><circle cx="4.500" cy="11.500" r="1.100"/><circle cx="10.500" cy="11" r="1.100"/></g></svg>
<span class="t " style="left:980px;top:212px;font-size:12px;letter-spacing:-2.5px;color:#333">&#8250;&#8250;</span>
<span class="t b" style="left:1012px;top:213px;text-decoration:underline;text-underline-offset:1.500px;letter-spacing:-.05px">QuartileChartView1</span>
<div class="btn" style="left:1143px;top:208px;width:23px;height:23px"></div>
<div class="btn" style="left:1167.5px;top:208px;width:23px;height:23px"></div>
<div class="btn" style="left:1192px;top:208px;width:23px;height:23px"></div>
<div class="btn" style="left:1216.5px;top:208px;width:23px;height:23px"></div>
<svg style="left:1148px;top:213px" width="13" height="12" viewBox="0 0 13 12"><rect x=".5" y=".5" width="12" height="11" fill="#d3daf0" stroke="#a9b4d0" stroke-width="1"/><path d="M6.500 .5v11" stroke="#a9b4d0" stroke-width="1"/></svg>
<svg style="left:1172.5px;top:213px" width="13" height="12" viewBox="0 0 13 12"><rect x=".5" y=".5" width="12" height="11" fill="#d3daf0" stroke="#a9b4d0" stroke-width="1"/><path d="M.5 6h12" stroke="#a9b4d0" stroke-width="1"/></svg>
<svg style="left:1195.5px;top:211px" width="16" height="16" viewBox="0 0 16 16"><rect x=".9" y=".9" width="14.200" height="14.200" fill="#fbfbfb" stroke="#1f2326" stroke-width="1.600"/><rect x=".9" y=".4" width="14.200" height="3.600" fill="#2b2f33"/></svg>
<svg style="left:1223.0px;top:214px" width="11" height="11" viewBox="0 0 11 11"><rect x=".5" y=".5" width="9.500" height="9.500" rx="1.800" fill="#f4f4f4" stroke="#4f4f4f" stroke-width="1"/><path d="M3 3l4.500 4.500M7.500 3L3 7.500" stroke="#2b2b2b" stroke-width="1.500"/></svg>
<div class="a" style="left:405px;top:234px;width:413px;height:720px;background:#52556e"></div>
<div class="a" style="left:405px;top:339px;width:413px;height:509px;background:#cfc8be"></div>
<i class="a" style="left:482px;top:337px;width:5px;height:5px;background:#8a00ff;border-radius:2px"></i>
<i class="a" style="left:609px;top:592px;width:4px;height:4px;background:#ff00ff"></i>
<svg style="left:485px;top:808px" width="70" height="66" viewBox="0 0 70 66"><path d="M10.300 52V16" stroke="#e6e24a" stroke-width="1.300"/><path d="M10.300 8.500l3.400 8.500h-6.800z" fill="#f2ee2c" stroke="#8a8720" stroke-width=".6"/><path d="M12 55.500h34" stroke="#d6323a" stroke-width="1.300"/><path d="M57.500 55.500l-10 3.600v-7.200z" fill="#f01020" stroke="#7a1015" stroke-width=".6"/><circle cx="10.300" cy="55.500" r="4" fill="#0b6a22"/><text x="12" y="15.500" font-family="Liberation Sans" font-size="14" fill="#f4f4f4">Y</text><text x="13" y="55.500" font-family="Liberation Sans" font-size="14" fill="#f4f4f4">Z</text><text x="51.500" y="56" font-family="Liberation Sans" font-size="14" fill="#f4f4f4">X</text></svg>
<div class="a" style="left:824px;top:231.500px;width:417px;height:725px;background:#fff;border:2px solid #0000ff"></div>
<svg style="left:0;top:0" width="1754" height="960" viewBox="0 0 1754 960" font-family="Liberation Sans, sans-serif" font-size="11.500" letter-spacing="-.45" fill="#111"><path d="M855.8 895.1H1220.0" stroke="#f6f6f6" stroke-width="1"/><path d="M855.8 861.2H1220.0" stroke="#f6f6f6" stroke-width="1"/><path d="M855.8 827.4H1220.0" stroke="#f6f6f6" stroke-width="1"/><path d="M855.8 793.5H1220.0" stroke="#f6f6f6" stroke-width="1"/><path d="M855.8 759.6H1220.0" stroke="#f6f6f6" stroke-width="1"/><path d="M855.8 725.7H1220.0" stroke="#f6f6f6" stroke-width="1"/><path d="M855.8 691.8H1220.0" stroke="#f6f6f6" stroke-width="1"/><path d="M855.8 658.0H1220.0" stroke="#f6f6f6" stroke-width="1"/><path d="M855.8 624.1H1220.0" stroke="#f6f6f6" stroke-width="1"/><path d="M855.8 590.2H1220.0" stroke="#f6f6f6" stroke-width="1"/><path d="M855.8 556.3H1220.0" stroke="#f6f6f6" stroke-width="1"/><path d="M855.8 522.4H1220.0" stroke="#f6f6f6" stroke-width="1"/><path d="M855.8 488.6H1220.0" stroke="#f6f6f6" stroke-width="1"/><path d="M855.8 454.7H1220.0" stroke="#f6f6f6" stroke-width="1"/><path d="M855.8 420.8H1220.0" stroke="#f6f6f6" stroke-width="1"/><path d="M855.8 386.9H1220.0" stroke="#f6f6f6" stroke-width="1"/><path d="M855.8 353.0H1220.0" stroke="#f6f6f6" stroke-width="1"/><path d="M855.8 319.2H1220.0" stroke="#f6f6f6" stroke-width="1"/><path d="M855.8 285.3H1220.0" stroke="#f6f6f6" stroke-width="1"/><path d="M855.8 251.4H1220.0" stroke="#f6f6f6" stroke-width="1"/><path d="M928.6 929.0V251.4" stroke="#f6f6f6" stroke-width="1"/><path d="M1001.5 929.0V251.4" stroke="#f6f6f6" stroke-width="1"/><path d="M1074.3 929.0V251.4" stroke="#f6f6f6" stroke-width="1"/><path d="M1147.2 929.0V251.4" stroke="#f6f6f6" stroke-width="1"/><path d="M1220.0 929.0V251.4" stroke="#f6f6f6" stroke-width="1"/><path d="M855.8 929.0L1220.0 251.4" stroke="#ff0d0d" stroke-width="1.400"/><path d="M855.8 250.9V929.5H1220.5" fill="none" stroke="#000" stroke-width="1"/><path d="M851.3 929.0H855.8" stroke="#000" stroke-width="1"/><text x="850.3" y="933.3" text-anchor="end">0</text><path d="M851.3 895.1H855.8" stroke="#000" stroke-width="1"/><text x="850.3" y="899.4" text-anchor="end">0.1</text><path d="M851.3 861.2H855.8" stroke="#000" stroke-width="1"/><text x="850.3" y="865.5" text-anchor="end">0.2</text><path d="M851.3 827.4H855.8" stroke="#000" stroke-width="1"/><text x="850.3" y="831.7" text-anchor="end">0.3</text><path d="M851.3 793.5H855.8" stroke="#000" stroke-width="1"/><text x="850.3" y="797.8" text-anchor="end">0.4</text><path d="M851.3 759.6H855.8" stroke="#000" stroke-width="1"/><text x="850.3" y="763.9" text-anchor="end">0.5</text><path d="M851.3 725.7H855.8" stroke="#000" stroke-width="1"/><text x="850.3" y="730.0" text-anchor="end">0.6</text><path d="M851.3 691.8H855.8" stroke="#000" stroke-width="1"/><text x="850.3" y="696.1" text-anchor="end">0.7</text><path d="M851.3 658.0H855.8" stroke="#000" stroke-width="1"/><text x="850.3" y="662.3" text-anchor="end">0.8</text><path d="M851.3 624.1H855.8" stroke="#000" stroke-width="1"/><text x="850.3" y="628.4" text-anchor="end">0.9</text><path d="M851.3 590.2H855.8" stroke="#000" stroke-width="1"/><text x="850.3" y="594.5" text-anchor="end">1</text><path d="M851.3 556.3H855.8" stroke="#000" stroke-width="1"/><text x="850.3" y="560.6" text-anchor="end">1.1</text><path d="M851.3 522.4H855.8" stroke="#000" stroke-width="1"/><text x="850.3" y="526.7" text-anchor="end">1.2</text><path d="M851.3 488.6H855.8" stroke="#000" stroke-width="1"/><text x="850.3" y="492.9" text-anchor="end">1.3</text><path d="M851.3 454.7H855.8" stroke="#000" stroke-width="1"/><text x="850.3" y="459.0" text-anchor="end">1.4</text><path d="M851.3 420.8H855.8" stroke="#000" stroke-width="1"/><text x="850.3" y="425.1" text-anchor="end">1.5</text><path d="M851.3 386.9H855.8" stroke="#000" stroke-width="1"/><text x="850.3" y="391.2" text-anchor="end">1.6</text><path d="M851.3 353.0H855.8" stroke="#000" stroke-width="1"/><text x="850.3" y="357.3" text-anchor="end">1.7</text><path d="M851.3 319.2H855.8" stroke="#000" stroke-width="1"/><text x="850.3" y="323.5" text-anchor="end">1.8</text><path d="M851.3 285.3H855.8" stroke="#000" stroke-width="1"/><text x="850.3" y="289.6" text-anchor="end">1.9</text><path d="M851.3 251.4H855.8" stroke="#000" stroke-width="1"/><text x="850.3" y="255.7" text-anchor="end">2</text><path d="M855.8 929.0v4.500" stroke="#000" stroke-width="1"/><text x="855.8" y="943.3" text-anchor="middle">0</text><path d="M928.6 929.0v4.500" stroke="#000" stroke-width="1"/><text x="928.6" y="943.3" text-anchor="middle">0.2</text><path d="M1001.5 929.0v4.500" stroke="#000" stroke-width="1"/><text x="1001.5" y="943.3" text-anchor="middle">0.4</text><path d="M1074.3 929.0v4.500" stroke="#000" stroke-width="1"/><text x="1074.3" y="943.3" text-anchor="middle">0.6</text><path d="M1147.2 929.0v4.500" stroke="#000" stroke-width="1"/><text x="1147.2" y="943.3" text-anchor="middle">0.8</text><path d="M1220.0 929.0v4.500" stroke="#000" stroke-width="1"/><text x="1220.0" y="943.3" text-anchor="middle">1</text><rect x="1106.500" y="251.500" width="114.500" height="21" fill="#fff" stroke="#2a2a2a" stroke-width="1.300"/><path d="M1111 262h19.500" stroke="#ff2020" stroke-width="1.800"/><text x="1133.500" y="265.500" style="font-size:11.500px;letter-spacing:-.15px">result ( block=2)</text></svg>
<!-- ======= RIGHT: FIND DATA ======= -->
<div class="a" style="left:1247px;top:182px;width:507px;height:18px;background:linear-gradient(#f4f4f4,#ececec)"></div>
<span class="t " style="left:1252px;top:185px;">Find Data</span>
<svg style="left:1728px;top:186px" width="24" height="10" viewBox="0 0 24 10"><rect x=".5" y=".5" width="9" height="8.500" rx="1.500" fill="none" stroke="#555" stroke-width="1"/><rect x="2.500" y="4" width="4" height="3.200" fill="none" stroke="#555" stroke-width=".9"/><path d="M4 4V2.500h3.800v3.200H6.500" fill="none" stroke="#555" stroke-width=".9"/><rect x="13.500" y=".5" width="9" height="8.500" rx="1.500" fill="none" stroke="#555" stroke-width="1"/><path d="M15.800 2.600l4.400 4.400M20.200 2.600l-4.400 4.400" stroke="#444" stroke-width="1.300"/></svg>
<div class="hdr" style="left:1256px;top:208px;width:489px;height:24px"><i class="minus" style="left:10px;top:9px"></i><span class="t" style="left:29px;top:5px">Create Selection</span></div>
<span class="t b" style="left:1256px;top:240px;">Selection Criteria</span>
<div class="hline" style="left:1256px;top:252px;width:489px"></div>
<span class="t " style="left:1256px;top:263px;">Data Producer</span>
<div class="cmb" style="left:1339px;top:259px;width:406px;height:21px"><span class="t" style="left:4px;top:3px">(none)</span><i class="arr" style="left:392px;top:9px;border-left-width:3.500px;border-right-width:3.500px"></i></div>
<span class="t " style="left:1256px;top:288px;">Element Type</span>
<div class="cmb d" style="left:1339px;top:284px;width:406px;height:21px"><i class="a" style="left:10px;top:8px;width:4px;height:4px;border-radius:50%;background:#cfcfcf"></i><span class="t" style="left:22px;top:4px">Point</span><i class="arr d" style="left:392px;top:9px;border-left-width:3.500px;border-right-width:3.500px"></i></div>
<div class="cmb d" style="left:1256px;top:309px;width:72px;height:21px"><i class="arr d" style="left:58px;top:9px;border-left-width:3.500px;border-right-width:3.500px"></i></div>
<div class="cmb d" style="left:1332px;top:309px;width:116px;height:21px"><span class="t" style="left:5px;top:4px">is</span><i class="arr d" style="left:102px;top:9px;border-left-width:3.500px;border-right-width:3.500px"></i></div>
<div class="inp" style="left:1452px;top:309px;width:234px;height:21px"><span class="t" style="left:3px;top:4px;color:#9a9a9a">value</span></div>
<div class="btn" style="left:1690px;top:309px;width:26px;height:22px"><svg style="left:7px;top:5px" width="11" height="11" viewBox="0 0 11 11"><path d="M5.500 .3v10.400M.3 5.500h10.400" stroke="#2a84c9" stroke-width="3.200"/></svg></div>
<div class="btn d" style="left:1719px;top:309px;width:26px;height:22px"><svg style="left:7px;top:5px" width="11" height="11" viewBox="0 0 11 11"><path d="M.3 5.500h10.400" stroke="#b9b9b9" stroke-width="3"/></svg></div>
<span class="t b" style="left:1256px;top:339px;">Selection Qualifiers</span>
<div class="hline" style="left:1256px;top:352px;width:489px"></div>
<span class="t " style="left:1256px;top:363px;">Process ID</span>
<div class="inp" style="left:1339px;top:358px;width:406px;height:21px;background:#efefef;border-color:#c6c6c6"><span class="t dis" style="left:3px;top:4px">-1</span></div>
<div class="btn d" style="left:1256px;top:383px;width:162px;height:22px"><svg style="left:47px;top:4px" width="13" height="14" viewBox="0 0 13 14"><path d="M1 6l3-1.500l3 .8v5.700l-3 1.500l-3-.9z" fill="#c9c9c9" stroke="#b5b5b5" stroke-width=".6"/><path d="M6 6.500l3-3.800l-1.500-1.100l4.500-1.100l-.5 4.700l-1.400-1.100l-2.800 3.600z" fill="#cfcfcf" stroke="#b9b9b9" stroke-width=".5"/></svg><span class="t" style="left:62px;top:4px">Find Data</span></div>
<div class="btn d" style="left:1420px;top:383px;width:161px;height:22px"><svg style="left:56px;top:4px" width="13" height="13" viewBox="0 0 13 13"><circle cx="6.500" cy="6.500" r="5.100" fill="none" stroke="#8a8a8a" stroke-width="2.100"/><path d="M2.900 10.100L10.100 2.900" stroke="#8a8a8a" stroke-width="2.100"/></svg><span class="t" style="left:72px;top:4px">Reset</span></div>
<div class="btn d" style="left:1584px;top:383px;width:161px;height:22px"><svg style="left:57px;top:4px" width="13" height="13" viewBox="0 0 13 13"><path d="M11.300 5.200A5 5 0 0 0 2.500 4.200" fill="none" stroke="#9b9b9b" stroke-width="1.900"/><path d="M.6 1.800v4.300h4.300z" fill="#9b9b9b" transform="rotate(-8 3 4)"/><path d="M1.700 8.300A5 5 0 0 0 10.500 9.300" fill="none" stroke="#9b9b9b" stroke-width="1.900"/><path d="M12.400 11.700V7.400H8.100z" fill="#9b9b9b" transform="rotate(-8 11 10)"/></svg><span class="t" style="left:72px;top:4px">Clear</span></div>
<div class="hdr" style="left:1256px;top:409px;width:489px;height:23px"><i class="minus" style="left:10px;top:9px"></i><span class="t" style="left:29px;top:5px">Selected Data (PythonCalculator1)</span></div>
<span class="t b" style="left:1257px;top:440px;">Attribute:</span>
<div class="cmb" style="left:1321px;top:436px;width:261px;height:22px"><i class="a" style="left:11px;top:9px;width:4px;height:4px;border-radius:50%;background:#f0a93a"></i><span class="t" style="left:22px;top:4px">Point Data</span><i class="arr" style="left:247px;top:9px;border-left-width:3.500px;border-right-width:3.500px"></i></div>
<div class="btn " style="left:1586px;top:435px;width:22px;height:22px"><svg style="left:3px;top:3px" width="15" height="15" viewBox="0 0 15 15"><rect x="1" y="1" width="11" height="11" fill="#fbe27a" stroke="#c9a21c" stroke-width="1"/><path d="M4.700 1v11M8.400 1v11M1 4.700h11M1 8.400h11" stroke="#c9a21c" stroke-width=".9"/><path d="M10.500 12.500h3.600l-1.800 2z" fill="#333"/></svg></div>
<div class="btn " style="left:1611px;top:435px;width:22px;height:22px"><svg style="left:3px;top:3px" width="15" height="15" viewBox="0 0 15 15"><circle cx="7.500" cy="7.500" r="6" fill="#a89a72" stroke="#e9b417" stroke-width="1.700"/><rect x="4" y="4" width="7" height="7" fill="#9a8f6f"/></svg></div>
<div class="cb" style="left:1637px;top:440px"></div>
<span class="t " style="left:1654px;top:440px;">Invert selection</span>
<div class="a" style="left:1257px;top:461px;width:488px;height:209px;background:#fff;border:1px solid #c2c2c2"></div>
<div class="a" style="left:1258px;top:462px;width:486px;height:18px;background:linear-gradient(#fafafa,#ebebeb);border-bottom:1px solid #cfcfcf"></div>
<div class="a" style="left:1258px;top:480px;width:11px;height:177px;background:#f0f0f0;border-right:1px solid #d4d4d4"></div>
<i class="a" style="left:1345px;top:462px;width:1px;height:17px;background:#d2d2d2"></i>
<i class="a" style="left:1398px;top:462px;width:1px;height:17px;background:#d2d2d2"></i>
<i class="a" style="left:1422px;top:462px;width:1px;height:17px;background:#d2d2d2"></i>
<i class="a" style="left:1550px;top:462px;width:1px;height:17px;background:#d2d2d2"></i>
<i class="a" style="left:1664px;top:462px;width:1px;height:17px;background:#d2d2d2"></i>
<i class="a" style="left:1705px;top:462px;width:1px;height:17px;background:#d2d2d2"></i>
<i class="a" style="left:1345px;top:480px;width:1px;height:26px;background:#d8d8d8"></i>
<i class="a" style="left:1398px;top:480px;width:1px;height:26px;background:#d8d8d8"></i>
<i class="a" style="left:1422px;top:480px;width:1px;height:26px;background:#d8d8d8"></i>
<i class="a" style="left:1465px;top:480px;width:1px;height:26px;background:#d8d8d8"></i>
<i class="a" style="left:1508px;top:480px;width:1px;height:26px;background:#d8d8d8"></i>
<i class="a" style="left:1550px;top:480px;width:1px;height:26px;background:#d8d8d8"></i>
<i class="a" style="left:1664px;top:480px;width:1px;height:26px;background:#d8d8d8"></i>
<i class="a" style="left:1705px;top:480px;width:1px;height:26px;background:#d8d8d8"></i>
<i class="a" style="left:1258px;top:506px;width:486px;height:1px;background:#d8d8d8"></i>
<span class="t " style="left:1275px;top:465px;">Block Name</span>
<span class="t " style="left:1351px;top:465px;">Point ID</span>
<span class="t " style="left:1402px;top:465px;">ids</span>
<span class="t " style="left:1470px;top:465px;">Points</span>
<span class="t " style="left:1560px;top:465px;">Points_Magnitude</span>
<span class="t " style="left:1670px;top:465px;">result</span>
<span class="t " style="left:1714px;top:465px;">time_</span>
<span class="t " style="left:1259px;top:487px;">0</span>
<span class="t " style="left:1272px;top:487px;">block_9</span>
<span class="t " style="left:1348px;top:487px;">12</span>
<span class="t " style="left:1401px;top:487px;">13</span>
<span class="t " style="left:1425px;top:487px;">0.5</span>
<span class="t " style="left:1468px;top:487px;">0.5</span>
<span class="t " style="left:1511px;top:487px;">0</span>
<span class="t " style="left:1554px;top:487px;">0.707107</span>
<span class="t " style="left:1668px;top:487px;">0</span>
<div class="a" style="left:1708px;top:487px;width:36px;height:14px;overflow:hidden"><span class="t" style="left:0;top:0">2.26975</span></div>
<div class="a" style="left:1258px;top:657px;width:486px;height:12px;background:#dadada;border-top:1px solid #c8c8c8"></div>
<div class="a" style="left:1258px;top:658px;width:12px;height:11px;background:#f5f5f5;border-right:1px solid #cdcdcd"><i class="a" style="left:3px;top:2px;width:0;height:0;border-top:3.500px solid transparent;border-bottom:3.500px solid transparent;border-right:4px solid #333"></i></div>
<div class="a" style="left:1270px;top:658px;width:358px;height:11px;background:#fbfbfb;border-right:1px solid #c8c8c8"></div>
<div class="a" style="left:1731px;top:658px;width:13px;height:11px;background:#f5f5f5;border-left:1px solid #cdcdcd"><i class="a" style="left:5px;top:2px;width:0;height:0;border-top:3.500px solid transparent;border-bottom:3.500px solid transparent;border-left:4px solid #333"></i></div>
<div class="btn " style="left:1257px;top:674px;width:161px;height:21px"><span class="t" style="left:62px;top:3px">Freeze</span></div>
<div class="btn " style="left:1420px;top:674px;width:161px;height:21px"><span class="t" style="left:60px;top:3px">Extract</span></div>
<div class="btn " style="left:1584px;top:674px;width:161px;height:21px"><span class="t" style="left:39px;top:3px">Plot Over Time</span></div>
<div class="hdr" style="left:1256px;top:699px;width:489px;height:23px"><i class="minus" style="left:10px;top:9px"></i><span class="t" style="left:29px;top:5px">Selection Display</span></div>
<span class="t b dis" style="left:1256px;top:727px;">Selection Labels</span>
<div class="hline" style="left:1256px;top:740px;width:489px;background:#d0d0d0"></div>
<div class="btn d" style="left:1256px;top:746px;width:243px;height:22px"><svg style="left:84px;top:3px" width="13" height="14" viewBox="0 0 13 14"><path d="M1 6l3-2l5 .5v6.500l-3 2l-5-.5z" fill="#d0d0d0" stroke="#bbb" stroke-width=".6"/><path d="M6 4l2-3l3 .3l-2 3.200z" fill="#c6c6c6"/><path d="M9 4.500l3-2.500v6l-3 2.500z" fill="#dadada" stroke="#bbb" stroke-width=".5"/></svg><span class="t" style="left:100px;top:4px">Cell Labels</span><i class="arr d" style="left:234px;top:10px;border-left-width:2.500px;border-right-width:2.500px;border-top-width:3px"></i></div>
<div class="btn d" style="left:1502px;top:746px;width:243px;height:22px"><i class="a" style="left:83px;top:8px;width:4px;height:4px;border-radius:50%;background:#cfcfcf"></i><span class="t" style="left:95px;top:4px">Point Labels</span><i class="arr d" style="left:233px;top:10px;border-left-width:2.500px;border-right-width:2.500px;border-top-width:3px"></i></div>
<div class="btn d" style="left:1256px;top:772px;width:489px;height:21px"><svg style="left:178px;top:3px" width="13" height="13" viewBox="0 0 13 13"><path d="M12.31 5.49L12.31 7.51L10.68 7.50L10.17 8.75L11.33 9.89L9.89 11.33L8.75 10.17L7.50 10.68L7.51 12.31L5.49 12.31L5.50 10.68L4.25 10.17L3.11 11.33L1.67 9.89L2.83 8.75L2.32 7.50L0.69 7.51L0.69 5.49L2.32 5.50L2.83 4.25L1.67 3.11L3.11 1.67L4.25 2.83L5.50 2.32L5.49 0.69L7.51 0.69L7.50 2.32L8.75 2.83L9.89 1.67L11.33 3.11L10.17 4.25L10.68 5.50z" fill="none" stroke="#c0c0c0" stroke-width="1.1" stroke-linejoin="round"/><circle cx="6.5" cy="6.5" r="2.0" fill="none" stroke="#c0c0c0" stroke-width="1.1"/></svg><span class="t" style="left:194px;top:4px">Edit Label Properties</span></div>
<span class="t b dis" style="left:1256px;top:798px;">Selection Appearance</span>
<div class="hline" style="left:1256px;top:811px;width:489px;background:#d0d0d0"></div>
<div class="btn d" style="left:1256px;top:817px;width:489px;height:21px"><i class="a" style="left:3px;top:3px;width:13px;height:13px;border-radius:50%;background:#b5b5b5;border:1px solid #9e9e9e"></i><span class="t" style="left:19px;top:4px">Selection Color</span></div>
<span class="t b dis" style="left:1256px;top:842px;">Interactive Selection</span>
<div class="hline" style="left:1256px;top:855px;width:489px;background:#d0d0d0"></div>
<div class="btn d" style="left:1256px;top:862px;width:489px;height:21px"><i class="a" style="left:3px;top:3px;width:13px;height:13px;border-radius:50%;background:#8f8f8f;border:1px solid #808080"></i><span class="t" style="left:19px;top:4px">Interactive Selection Color</span></div>
<div class="btn d" style="left:1256px;top:887px;width:489px;height:21px"><svg style="left:147px;top:3px" width="13" height="13" viewBox="0 0 13 13"><path d="M12.31 5.49L12.31 7.51L10.68 7.50L10.17 8.75L11.33 9.89L9.89 11.33L8.75 10.17L7.50 10.68L7.51 12.31L5.49 12.31L5.50 10.68L4.25 10.17L3.11 11.33L1.67 9.89L2.83 8.75L2.32 7.50L0.69 7.51L0.69 5.49L2.32 5.50L2.83 4.25L1.67 3.11L3.11 1.67L4.25 2.83L5.50 2.32L5.49 0.69L7.51 0.69L7.50 2.32L8.75 2.83L9.89 1.67L11.33 3.11L10.17 4.25L10.68 5.50z" fill="none" stroke="#c0c0c0" stroke-width="1.1" stroke-linejoin="round"/><circle cx="6.5" cy="6.5" r="2.0" fill="none" stroke="#c0c0c0" stroke-width="1.1"/></svg><span class="t" style="left:163px;top:4px">Edit Interactive Label Properties</span></div>
<div class="a" style="left:1247px;top:935px;width:507px;height:1px;background:#c8c8c8"></div>
<div class="a" style="left:1248px;top:935px;width:114px;height:21px;background:linear-gradient(#e2e2e2,#d9d9d9);border:1px solid #c4c4c4;border-top:none;border-radius:0 0 3px 3px"></div>
<span class="t " style="left:1259px;top:939px;">Color Map Editor</span>
<div class="a" style="left:1362px;top:935px;width:73px;height:23px;background:#f4f4f4;border:1px solid #c4c4c4;border-top:none;border-radius:0 0 3px 3px"></div>
<span class="t " style="left:1372px;top:940px;">Find Data</span>
<div class="a" style="left:1245px;top:562px;width:2px;height:16px;background-image:radial-gradient(circle at 1px 1px,#bdbdbd .6px,transparent .9px);background-size:3px 3px"></div>
<div class="a" style="left:397px;top:562px;width:2px;height:16px;background-image:radial-gradient(circle at 1px 1px,#bdbdbd .6px,transparent .9px);background-size:3px 3px"></div>
</body>
</html>
